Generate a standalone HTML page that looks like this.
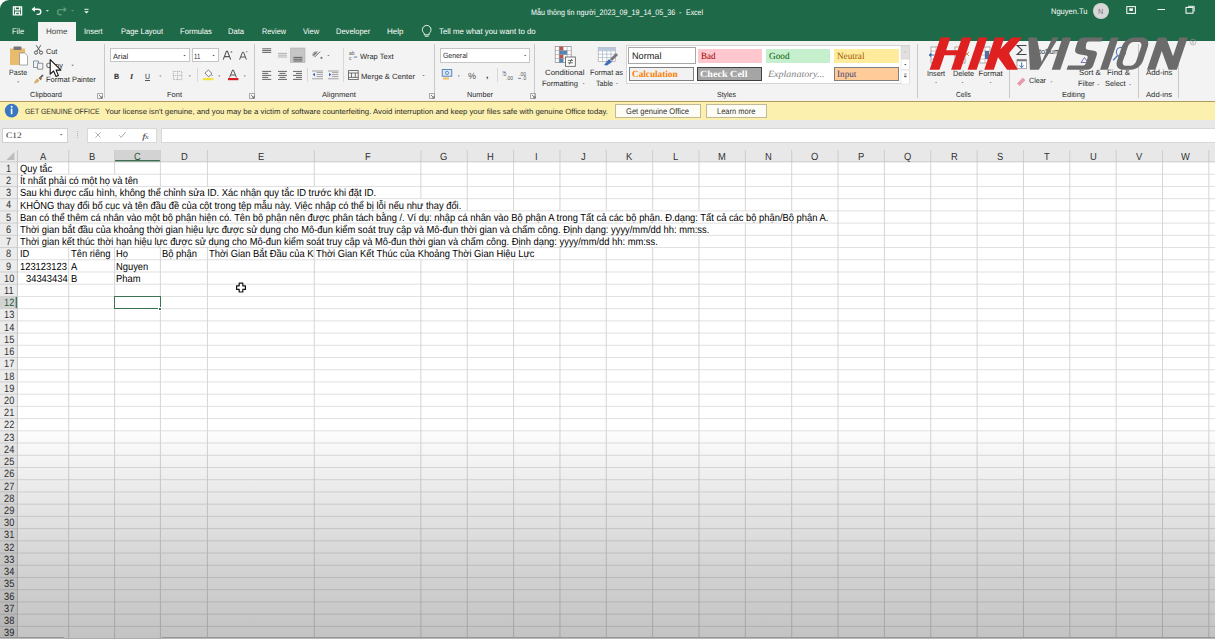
<!DOCTYPE html>
<html><head><meta charset="utf-8">
<style>
*{box-sizing:border-box;margin:0;padding:0}
html,body{width:1215px;height:639px;overflow:hidden;background:#fff;font-family:"Liberation Sans",sans-serif;position:relative}
.a{position:absolute;white-space:nowrap}
.t{position:absolute;white-space:nowrap;line-height:1;text-rendering:geometricPrecision}
svg{overflow:visible}
</style></head><body>
<div class="a" style="left:0;top:0;width:1215px;height:41px;background:#1e6947;border-top-left-radius:9px"></div>
<svg class="a" style="left:0;top:0" width="100" height="22" viewBox="0 0 100 22">
<g fill="none" stroke="#fff" stroke-width="1.3">
<path d="M13.4 6.8h8.2v8h-8.2z"/><path d="M15.3 6.8v3h4.4v-3" /><path d="M15.6 14.8v-2.6h3.8v2.6"/>
</g>
<path d="M34 9.2h4.2a2.6 2.6 0 0 1 0 5.2h-1.6" fill="none" stroke="#fff" stroke-width="1.4"/>
<path d="M31.6 9.2l3.2-2.8v5.6z" fill="#fff"/>
<path d="M45.8 10l1.6 1.7 1.6-1.7z" fill="#cfe0d5"/>
<path d="M64.4 9.6h-4.2a2.6 2.6 0 0 0 0 5.2h1.4" fill="none" stroke="#5f9a78" stroke-width="1.4"/>
<path d="M66.8 9.6l-3.2-2.8v5.6z" fill="#5f9a78"/>
<path d="M71 10l1.5 1.6 1.5-1.6z" fill="#5f9a78"/>
<path d="M84.4 9.3h4.2" stroke="#fff" stroke-width="0.9"/><path d="M84.3 11.2h4.4l-2.2 2.2z" fill="#fff"/>
</svg>
<div class="t" style="left:530.70px;top:9.00px;font-size:8px;color:#fff;transform:scaleX(0.8964);transform-origin:0 0;">Mẫu thông tin người_2023_09_19_14_05_36</div>
<div class="t" style="left:679.30px;top:9.00px;font-size:8px;color:#fff;transform:scaleX(0.9357);transform-origin:0 0;">-</div>
<div class="t" style="left:686.00px;top:9.00px;font-size:8px;color:#fff;transform:scaleX(0.8690);transform-origin:0 0;">Excel</div>
<div class="t" style="left:1050.50px;top:8.00px;font-size:8px;color:#fff;transform:scaleX(0.9397);transform-origin:0 0;">Nguyen.Tu</div>
<div class="a" style="left:1093px;top:3px;width:16px;height:16px;border-radius:50%;background:#d7d7d7"></div>
<div class="t" style="left:1098.30px;top:8.00px;font-size:7.5px;color:#777;transform:scaleX(0.9591);transform-origin:0 0;">N</div>
<svg class="a" style="left:1120px;top:0" width="95" height="22" viewBox="1120 0 95 22">
<rect x="1126.8" y="6.6" width="8.6" height="6.8" fill="none" stroke="#fff" stroke-width="1"/>
<rect x="1129.3" y="8.3" width="3.6" height="2.6" fill="#fff"/>
<path d="M1157.5 9.5h7.5" stroke="#fff" stroke-width="1"/>
<rect x="1186" y="7.4" width="7" height="5.8" fill="none" stroke="#fff" stroke-width="1"/>
<path d="M1188 6.3h6.2v5.2" fill="none" stroke="#fff" stroke-width="0.9"/>
</svg>
<div class="a" style="left:37.8px;top:21.9px;width:38px;height:20px;background:#f3f3f3"></div>
<div class="t" style="left:11.60px;top:28.00px;font-size:8px;color:#fff;transform:scaleX(0.9387);transform-origin:0 0;">File</div>
<div class="t" style="left:45.70px;top:28.00px;font-size:8px;color:#444;transform:scaleX(1.0073);transform-origin:0 0;">Home</div>
<div class="t" style="left:84.40px;top:28.00px;font-size:8px;color:#fff;transform:scaleX(0.9293);transform-origin:0 0;">Insert</div>
<div class="t" style="left:120.50px;top:28.00px;font-size:8px;color:#fff;transform:scaleX(0.9346);transform-origin:0 0;">Page Layout</div>
<div class="t" style="left:179.80px;top:28.00px;font-size:8px;color:#fff;transform:scaleX(0.9537);transform-origin:0 0;">Formulas</div>
<div class="t" style="left:228.40px;top:28.00px;font-size:8px;color:#fff;transform:scaleX(0.9464);transform-origin:0 0;">Data</div>
<div class="t" style="left:261.70px;top:28.00px;font-size:8px;color:#fff;transform:scaleX(0.9148);transform-origin:0 0;">Review</div>
<div class="t" style="left:302.70px;top:28.00px;font-size:8px;color:#fff;transform:scaleX(0.9359);transform-origin:0 0;">View</div>
<div class="t" style="left:336.30px;top:28.00px;font-size:8px;color:#fff;transform:scaleX(0.9405);transform-origin:0 0;">Developer</div>
<div class="t" style="left:387.40px;top:28.00px;font-size:8px;color:#fff;transform:scaleX(1.0089);transform-origin:0 0;">Help</div>
<div class="t" style="left:439.30px;top:28.00px;font-size:8px;color:#fff;transform:scaleX(0.9796);transform-origin:0 0;">Tell me what you want to do</div>
<svg class="a" style="left:420px;top:24px" width="14" height="14" viewBox="420 24 14 14">
<path d="M424.2 33.2c-1.4-1.1-1.8-2.2-1.8-3.5a4.3 4.3 0 0 1 8.6 0c0 1.3-.5 2.4-1.8 3.5v1.6h-5z" fill="none" stroke="#fff" stroke-width="0.9"/>
<path d="M424.8 36.2h3.8" stroke="#fff" stroke-width="0.9"/></svg>
<div class="a" style="left:0;top:40.5px;width:1215px;height:60.5px;background:#f3f3f3"></div>
<div class="a" style="left:104.0px;top:44px;width:1px;height:54px;background:#c9c9c9"></div>
<div class="a" style="left:253.5px;top:44px;width:1px;height:54px;background:#c9c9c9"></div>
<div class="a" style="left:433.5px;top:44px;width:1px;height:54px;background:#c9c9c9"></div>
<div class="a" style="left:534.0px;top:44px;width:1px;height:54px;background:#c9c9c9"></div>
<div class="a" style="left:916.8px;top:44px;width:1px;height:54px;background:#c9c9c9"></div>
<div class="a" style="left:1009.0px;top:44px;width:1px;height:54px;background:#c9c9c9"></div>
<div class="a" style="left:1138.2px;top:44px;width:1px;height:54px;background:#c9c9c9"></div>
<div class="a" style="left:1178.1px;top:44px;width:1px;height:54px;background:#c9c9c9"></div>
<div class="t" style="left:30.00px;top:91.00px;font-size:7.4px;color:#2b2b2b;transform:scaleX(1.0114);transform-origin:0 0;">Clipboard</div>
<div class="t" style="left:166.50px;top:91.00px;font-size:7.4px;color:#2b2b2b;transform:scaleX(1.0137);transform-origin:0 0;">Font</div>
<div class="t" style="left:322.00px;top:91.00px;font-size:7.4px;color:#2b2b2b;transform:scaleX(1.0342);transform-origin:0 0;">Alignment</div>
<div class="t" style="left:467.00px;top:91.00px;font-size:7.4px;color:#2b2b2b;transform:scaleX(0.9887);transform-origin:0 0;">Number</div>
<div class="t" style="left:717.00px;top:91.00px;font-size:7.4px;color:#2b2b2b;transform:scaleX(0.9434);transform-origin:0 0;">Styles</div>
<div class="t" style="left:955.50px;top:91.00px;font-size:7.4px;color:#2b2b2b;transform:scaleX(0.9125);transform-origin:0 0;">Cells</div>
<div class="t" style="left:1062.00px;top:91.00px;font-size:7.4px;color:#2b2b2b;transform:scaleX(1.0173);transform-origin:0 0;">Editing</div>
<div class="t" style="left:1145.50px;top:91.00px;font-size:7.4px;color:#2b2b2b;transform:scaleX(1.0374);transform-origin:0 0;">Add-ins</div>
<svg class="a" style="left:97px;top:93px" width="6" height="6" viewBox="0 0 6 6"><path d="M0.5 5.5V0.5h5v5z" fill="none" stroke="#888" stroke-width="0.7"/><path d="M2 2l3 3M5 3v2H3" fill="none" stroke="#666" stroke-width="0.8"/></svg>
<svg class="a" style="left:249px;top:93px" width="6" height="6" viewBox="0 0 6 6"><path d="M0.5 5.5V0.5h5v5z" fill="none" stroke="#888" stroke-width="0.7"/><path d="M2 2l3 3M5 3v2H3" fill="none" stroke="#666" stroke-width="0.8"/></svg>
<svg class="a" style="left:429px;top:93px" width="6" height="6" viewBox="0 0 6 6"><path d="M0.5 5.5V0.5h5v5z" fill="none" stroke="#888" stroke-width="0.7"/><path d="M2 2l3 3M5 3v2H3" fill="none" stroke="#666" stroke-width="0.8"/></svg>
<svg class="a" style="left:529.5px;top:93px" width="6" height="6" viewBox="0 0 6 6"><path d="M0.5 5.5V0.5h5v5z" fill="none" stroke="#888" stroke-width="0.7"/><path d="M2 2l3 3M5 3v2H3" fill="none" stroke="#666" stroke-width="0.8"/></svg>
<svg class="a" style="left:0;top:40px" width="105" height="50" viewBox="0 40 105 50">
<rect x="10" y="48.5" width="15" height="16.5" fill="#e9bb6c"/>
<rect x="13.5" y="46.6" width="8" height="3.4" rx="1" fill="#777"/>
<path d="M19.5 53h5.2l2.8 2.8V65h-8z" fill="#fff" stroke="#888" stroke-width="0.7"/>
<path d="M34 83.6c.6-2.4 1.6-4 3.4-5l2 2c-1 1.8-2.6 2.8-5.4 3z" fill="#d8b26a"/>
<path d="M38.6 78.2l1.4-1.4 2 2-1.4 1.4z" fill="#8a6a3a"/>
<path d="M40.6 77.4l2.4-2.4" stroke="#555" stroke-width="1.6"/>
<g fill="none" stroke="#4a4a4a" stroke-width="0.9"><circle cx="36" cy="52.6" r="1.6"/><circle cx="41" cy="52.6" r="1.6"/><path d="M36.8 51.4l4-6.2M40.2 51.4l-4-6.2"/></g>
<g fill="none" stroke="#6a7a8a" stroke-width="0.8"><path d="M33.5 61h5v6.5h-5z"/><path d="M37.6 63.2h5.2v6h-5.2z" fill="#f3f3f3"/></g>
<path d="M17 81.5l1.2 1.2 1.2-1.2z" fill="#777"/>
<path d="M71.3 64.8l1.3 1.3 1.3-1.3z" fill="#666"/>
</svg>
<div class="t" style="left:8.80px;top:69.00px;font-size:7.6px;color:#2b2b2b;transform:scaleX(0.9319);transform-origin:0 0;">Paste</div>
<div class="t" style="left:45.80px;top:48.00px;font-size:7.6px;color:#2b2b2b;transform:scaleX(0.9554);transform-origin:0 0;">Cut</div>
<div class="t" style="left:45.80px;top:62.00px;font-size:7.6px;color:#2b2b2b;transform:scaleX(0.9586);transform-origin:0 0;">Copy</div>
<div class="t" style="left:45.80px;top:76.00px;font-size:7.6px;color:#2b2b2b;transform:scaleX(0.9894);transform-origin:0 0;">Format Painter</div>
<div class="a" style="left:110.3px;top:48.3px;width:79.3px;height:14.1px;background:#fff;border:0.8px solid #c6c6c6"></div>
<div class="a" style="left:191.5px;top:48.3px;width:27px;height:14.1px;background:#fff;border:0.8px solid #c6c6c6"></div>
<div class="t" style="left:112.50px;top:53.00px;font-size:7.6px;color:#2b2b2b;transform:scaleX(1.0064);transform-origin:0 0;">Arial</div>
<div class="t" style="left:193.50px;top:53.00px;font-size:7.6px;color:#2b2b2b;transform:scaleX(0.7857);transform-origin:0 0;">11</div>
<svg class="a" style="left:105px;top:44px" width="150" height="44" viewBox="105 44 150 44">
<path d="M183.3 55l1.3 1.3 1.3-1.3z" fill="#555"/><path d="M212.3 55l1.3 1.3 1.3-1.3z" fill="#555"/>
<path d="M223.2 59.6l3.2-8.2h1.1l3.2 8.2M224.5 56.6h4.9" fill="none" stroke="#555" stroke-width="1.1"/><path d="M230.2 52.4l1.2-1.3 1.2 1.3z" fill="#555"/>
<path d="M239.6 59.6l2.9-7.4h1l2.9 7.4M240.8 57h4.3" fill="none" stroke="#555" stroke-width="1"/><path d="M245.6 51.4l1.1 1.2 1.1-1.2z" fill="#555"/>
<path d="M159.2 75.5l1.2 1.2 1.2-1.2zM188.6 75.5l1.2 1.2 1.2-1.2zM218.2 75.5l1.2 1.2 1.2-1.2zM243.6 75.5l1.2 1.2 1.2-1.2z" fill="#777"/>
<g fill="none" stroke="#9a9a9a" stroke-width="0.8" stroke-dasharray="1 0.8"><rect x="173.4" y="71.4" width="8.4" height="8.2"/><path d="M177.6 71.4v8.2M173.4 75.5h8.4"/></g>
<path d="M197.5 68v14" stroke="#d0d0d0" stroke-width="0.8"/>
<path d="M205 73.2l3.4-3.2 3.6 3.6-3.4 3.2z" fill="#fff" stroke="#555" stroke-width="0.8"/><path d="M211.2 73.8l1.4 1.8-.6.6z" fill="#3b6fb6"/>
<rect x="203" y="78" width="10.4" height="2.2" fill="#f4e23a"/>
<path d="M229.6 77.4l3-7.4h.8l3 7.4M230.8 75h4.4" fill="none" stroke="#555" stroke-width="1"/>
<rect x="228" y="78" width="10.4" height="2.2" fill="#d42020"/>
</svg>
<div class="t" style="left:114.20px;top:73.00px;font-size:7.8px;color:#2b2b2b;font-weight:bold;transform:scaleX(0.9219);transform-origin:0 0;">B</div>
<div class="t" style="left:129.50px;top:73.00px;font-size:7.8px;color:#2b2b2b;font-weight:bold;font-style:italic;font-family:'Liberation Serif',serif;transform:scaleX(1.0503);transform-origin:0 0;">I</div>
<div class="t" style="left:145.20px;top:73.00px;font-size:7.6px;color:#2b2b2b;transform:scaleX(0.9117);transform-origin:0 0;">U</div>
<div class="a" style="left:145.2px;top:79.8px;width:5.2px;height:0.8px;background:#555"></div>
<svg class="a" style="left:255px;top:44px" width="180" height="44" viewBox="255 44 180 44">
<rect x="290.5" y="48" width="14.5" height="14.5" fill="#c6c6c6" stroke="#b0b0b0" stroke-width="0.6"/>
<g stroke="#555" stroke-width="0.9"><path d="M262.2 48.8h9M262.2 50.6h9M262.2 52.4h9"/></g>
<g stroke="#aaa" stroke-width="0.9"><path d="M278 53.4h9M278 55.2h9M278 57h9"/></g>
<g stroke="#555" stroke-width="0.9"><path d="M293.4 57.4h9M293.4 59.2h9M293.4 61h9"/></g>
<path d="M313 55.6l4.2-4.2M314.5 57.2l5.5-5.5" stroke="#555" stroke-width="0.9"/><text x="312" y="55" font-size="5" fill="#555" font-family="Liberation Sans" transform="rotate(-45 315 54)">ab</text>
<path d="M321 56.4l2 1.8-2.6 .6z" fill="#555"/>
<path d="M327.2 55l1.2 1.2 1.2-1.2z" fill="#777"/>
<path d="M343.5 48v34M307.5 68v14" stroke="#d0d0d0" stroke-width="0.8"/>
<g stroke="#555" stroke-width="0.9"><path d="M262.2 71.4h9M262.2 73.4h6M262.2 75.4h9M262.2 77.4h6M262.2 79.4h9"/>
<path d="M278 71.4h9M279.5 73.4h6M278 75.4h9M279.5 77.4h6M278 79.4h9"/>
<path d="M293 71.4h9M296 73.4h6M293 75.4h9M296 77.4h6M293 79.4h9"/></g>
<g stroke="#999" stroke-width="0.9"><path d="M316.6 72.6h6.4M316.6 74.6h6.4M316.6 76.6h6.4M312 78.8h11"/><path d="M332 72.6h6.4M332 74.6h6.4M332 76.6h6.4M328 78.8h10.6"/><path d="M312 71h11M328 71h10.6"/></g>
<path d="M312.6 74.6l2.4-1.8v3.6z" fill="#3b6fb6"/><path d="M331.4 74.6l-2.4-1.8v3.6z" fill="#3b6fb6"/>
<g fill="none" stroke="#555" stroke-width="0.8"><rect x="348.6" y="70.6" width="9.6" height="9"/><path d="M348.6 73h9.6M348.6 77.4h9.6M351.5 73v4.4M355.3 73v4.4"/></g>
<path d="M422.4 75l1.2 1.2 1.2-1.2z" fill="#777"/>
<text x="349" y="55" font-size="5" fill="#555" font-family="Liberation Sans">ab</text><text x="349" y="59.5" font-size="5" fill="#555" font-family="Liberation Sans">c</text>
<path d="M353.5 57.2h3.4l-1 -1" fill="none" stroke="#3b6fb6" stroke-width="0.7"/>
</svg>
<div class="t" style="left:360.00px;top:53.00px;font-size:7.6px;color:#2b2b2b;transform:scaleX(0.9880);transform-origin:0 0;">Wrap Text</div>
<div class="t" style="left:360.50px;top:73.00px;font-size:7.6px;color:#2b2b2b;transform:scaleX(1.0073);transform-origin:0 0;">Merge &amp; Center</div>
<div class="a" style="left:440px;top:48px;width:89.5px;height:14.8px;background:#fff;border:0.8px solid #c6c6c6"></div>
<div class="t" style="left:442.50px;top:52.00px;font-size:7.6px;color:#2b2b2b;transform:scaleX(0.9064);transform-origin:0 0;">General</div>
<svg class="a" style="left:435px;top:44px" width="100" height="44" viewBox="435 44 100 44">
<path d="M524 55l1.2 1.2 1.2-1.2z" fill="#555"/>
<rect x="442.2" y="69.6" width="9.6" height="6.6" fill="#dce7f4" stroke="#3b6fb6" stroke-width="0.8"/>
<circle cx="447" cy="72.9" r="1.6" fill="none" stroke="#3b6fb6" stroke-width="0.7"/>
<rect x="443" y="77.4" width="6" height="2.2" fill="#f3c36b"/>
<path d="M457.6 75.5l1.2 1.2 1.2-1.2z" fill="#777"/>
<path d="M497.5 68v14" stroke="#d0d0d0" stroke-width="0.8"/>
<text x="502" y="75.5" font-size="5" fill="#555" font-family="Liberation Sans">.0</text><text x="506" y="80" font-size="5" fill="#555" font-family="Liberation Sans">.00</text>
<path d="M502.4 72h3" stroke="#3b6fb6" stroke-width="0.8"/>
<text x="519" y="75.5" font-size="5" fill="#555" font-family="Liberation Sans">.00</text><text x="522" y="80" font-size="5" fill="#555" font-family="Liberation Sans">.0</text>
<path d="M518 78.4h3" stroke="#3b6fb6" stroke-width="0.8"/>
</svg>
<div class="t" style="left:468.00px;top:72.00px;font-size:9.2px;color:#555;transform:scaleX(0.9790);transform-origin:0 0;">%</div>
<div class="t" style="left:486.00px;top:72.00px;font-size:8px;color:#2b2b2b;font-weight:bold;transform:scaleX(1.0741);transform-origin:0 0;">,</div>
<svg class="a" style="left:540px;top:44px" width="90" height="26" viewBox="540 44 90 26">
<g fill="#fff" stroke="#8a8a8a" stroke-width="0.7">
<rect x="555.2" y="46.6" width="16" height="16"/>
</g>
<rect x="559.2" y="46.6" width="4" height="4" fill="#c0504d"/>
<rect x="559.2" y="50.6" width="8" height="4" fill="#4f81bd"/>
<rect x="559.2" y="54.6" width="4" height="4" fill="#c0504d"/>
<rect x="559.2" y="58.6" width="4" height="4" fill="#4f81bd"/>
<path d="M555.2 50.6h16M555.2 54.6h16M555.2 58.6h16M559.2 46.6v16M563.2 46.6v16M567.2 46.6v16" stroke="#8a8a8a" stroke-width="0.5"/>
<rect x="565.5" y="57" width="9.8" height="9.3" fill="#fff" stroke="#555" stroke-width="0.8"/>
<path d="M567.8 60.4h5.2M567.8 62.8h5.2M571.8 58.8l-2.6 5.6" stroke="#333" stroke-width="0.7"/>
<rect x="598.2" y="47.4" width="17" height="14" fill="#fff" stroke="#999" stroke-width="0.6"/>
<path d="M598.2 50.8h17M598.2 54.2h17M598.2 57.6h17M602.5 47.4v14M606.8 47.4v14M611 47.4v14" stroke="#9ab" stroke-width="0.6"/>
<rect x="598.2" y="47.4" width="17" height="3.4" fill="#b8c8dc"/>
<path d="M604 65l5-6 3 3-5 3.6z" fill="#3b6fb6"/><path d="M610 59l6-6 2 2-6 6z" fill="#777"/>
</svg>
<div class="t" style="left:544.50px;top:69.00px;font-size:7.6px;color:#2b2b2b;transform:scaleX(1.0395);transform-origin:0 0;">Conditional</div>
<div class="t" style="left:541.50px;top:80.00px;font-size:7.6px;color:#2b2b2b;transform:scaleX(0.9918);transform-origin:0 0;">Formatting</div>
<div class="t" style="left:590.00px;top:69.00px;font-size:7.6px;color:#2b2b2b;transform:scaleX(0.9653);transform-origin:0 0;">Format as</div>
<div class="t" style="left:595.50px;top:80.00px;font-size:7.6px;color:#2b2b2b;transform:scaleX(0.9363);transform-origin:0 0;">Table</div>
<svg class="a" style="left:580px;top:81px" width="40" height="6" viewBox="580 81 40 6"><path d="M582.6 83l1.1 1.1 1.1-1.1zM616 83l1.1 1.1 1.1-1.1z" fill="#777"/></svg>
<div class="a" style="left:626px;top:45.4px;width:284px;height:39px;background:#fff;border:0.8px solid #d4d4d4"></div>
<div class="a" style="left:628px;top:47.4px;width:67.5px;height:16.8px;background:#fff;border:1.3px solid #a8a8a8"></div>
<div class="a" style="left:697.5px;top:48.5px;width:64.5px;height:14.5px;background:#ffc7ce"></div>
<div class="a" style="left:765.5px;top:48.5px;width:64.5px;height:14.5px;background:#c6efce"></div>
<div class="a" style="left:834px;top:48.5px;width:64.5px;height:14.5px;background:#ffeb9c"></div>
<div class="a" style="left:629px;top:67px;width:65px;height:14px;background:#f2f2f2;border:0.8px solid #7f7f7f"></div>
<div class="a" style="left:697px;top:67px;width:65px;height:14px;background:#a5a5a5;border:1.6px solid #3f3f3f"></div>
<div class="a" style="left:834px;top:67px;width:64.5px;height:14px;background:#ffcc99;border:0.8px solid #7f7f7f"></div>
<div class="t" style="left:631.50px;top:51.00px;font-size:9.4px;color:#222;transform:scaleX(0.9762);transform-origin:0 0;">Normal</div>
<div class="t" style="left:700.50px;top:53.00px;font-size:9.4px;color:#9c0006;font-family:'Liberation Serif',serif;transform:scaleX(0.9663);transform-origin:0 0;">Bad</div>
<div class="t" style="left:768.50px;top:53.00px;font-size:9.4px;color:#006100;font-family:'Liberation Serif',serif;transform:scaleX(0.9835);transform-origin:0 0;">Good</div>
<div class="t" style="left:837.00px;top:53.00px;font-size:9.4px;color:#9c5700;font-family:'Liberation Serif',serif;transform:scaleX(0.9778);transform-origin:0 0;">Neutral</div>
<div class="t" style="left:632.00px;top:71.00px;font-size:9.4px;color:#fa7d00;font-weight:bold;font-family:'Liberation Serif',serif;transform:scaleX(0.9815);transform-origin:0 0;">Calculation</div>
<div class="t" style="left:700.20px;top:71.00px;font-size:9.4px;color:#fff;font-weight:bold;font-family:'Liberation Serif',serif;transform:scaleX(1.0792);transform-origin:0 0;">Check Cell</div>
<div class="t" style="left:768.00px;top:71.00px;font-size:9.4px;color:#7f7f7f;font-style:italic;font-family:'Liberation Serif',serif;transform:scaleX(1.0689);transform-origin:0 0;">Explanatory...</div>
<div class="t" style="left:836.50px;top:71.00px;font-size:9.4px;color:#3f3f76;font-family:'Liberation Serif',serif;transform:scaleX(0.9800);transform-origin:0 0;">Input</div>
<svg class="a" style="left:900px;top:44px" width="12" height="42" viewBox="900 44 12 42">
<rect x="901" y="46.2" width="8.6" height="12.5" fill="#e0e0e0" stroke="#d0d0d0" stroke-width="0.5"/>
<rect x="901" y="59.2" width="8.6" height="10.5" fill="#fff" stroke="#d8d8d8" stroke-width="0.5"/>
<rect x="901" y="70" width="8.6" height="14" fill="#fff" stroke="#d8d8d8" stroke-width="0.5"/>
<path d="M904.2 52h2.4" stroke="#bbb" stroke-width="0.6"/>
<path d="M904 64l1.3 1.3 1.3-1.3z" fill="#555"/>
<path d="M903.8 74h3M904 76l1.3 1.3 1.3-1.3z" stroke="#555" stroke-width="0.6" fill="#555"/>
</svg>
<svg class="a" style="left:918px;top:44px" width="92" height="44" viewBox="918 44 92 44">
<g fill="#fff" stroke="#888" stroke-width="0.7">
<rect x="931" y="47" width="10" height="16"/><rect x="955" y="47" width="10" height="16"/><rect x="980" y="47" width="10" height="16"/>
</g>
<path d="M931 51h10M931 55h10M931 59h10M936 47v16M955 51h10M955 55h10M955 59h10M960 47v16M980 51h10M980 55h10M980 59h10M985 47v16" stroke="#888" stroke-width="0.5"/>
<path d="M929 55h5M929 55l2-1.6v3.2z" stroke="#3b6fb6" fill="#3b6fb6" stroke-width="0.8"/>
<path d="M965 52l4 4M969 52l-4 4" stroke="#e07a3a" stroke-width="0.9"/>
<rect x="985" y="51" width="4" height="8" fill="#4f6fa0"/>
<path d="M935 82l1.1 1.1 1.1-1.1zM961.5 82l1.1 1.1 1.1-1.1zM989.5 82l1.1 1.1 1.1-1.1z" fill="#777"/>
</svg>
<div class="t" style="left:926.70px;top:70.00px;font-size:7.6px;color:#2b2b2b;transform:scaleX(0.9526);transform-origin:0 0;">Insert</div>
<div class="t" style="left:952.50px;top:70.00px;font-size:7.6px;color:#2b2b2b;transform:scaleX(0.9566);transform-origin:0 0;">Delete</div>
<div class="t" style="left:978.50px;top:70.00px;font-size:7.6px;color:#2b2b2b;">Format</div>
<svg class="a" style="left:1010px;top:44px" width="170" height="44" viewBox="1010 44 170 44">
<path d="M1026.5 45.5h-9.3l4.8 4.4-4.8 4.6h9.3" fill="none" stroke="#444" stroke-width="1.2"/>
<rect x="1017" y="59.5" width="9.4" height="9.2" fill="#fff" stroke="#888" stroke-width="0.7"/>
<rect x="1017" y="59.5" width="9.4" height="1.8" fill="#777"/>
<path d="M1021.7 62.4v5M1019.6 65.4l2.1 2.1 2.1-2.1" fill="none" stroke="#3b6fb6" stroke-width="1"/>
<path d="M1017 83.4l5.8-5.8 2.6 2.6-5.8 5.8z" fill="#e89aae"/>
<path d="M1050.4 81.5l1.1 1.1 1.1-1.1zM1097.2 84.2l1.1 1.1 1.1-1.1zM1129 84.2l1.1 1.1 1.1-1.1z" fill="#777"/>
<path d="M1081 62.5l3.5-5 3.5 5z" fill="none" stroke="#7b6fb8" stroke-width="1"/>
<circle cx="1121" cy="52" r="4.6" fill="none" stroke="#4a7cc0" stroke-width="1.1"/><path d="M1117.6 55.6l-4.4 4.6" stroke="#4a7cc0" stroke-width="1.4"/>
<circle cx="1158" cy="55" r="2.4" fill="#f0a830"/>
</svg>
<div class="t" style="left:1029.00px;top:77.00px;font-size:7.6px;color:#2b2b2b;transform:scaleX(0.9363);transform-origin:0 0;">Clear</div>
<div class="t" style="left:1030.00px;top:48.00px;font-size:7.6px;color:#2b2b2b;transform:scaleX(0.9600);transform-origin:0 0;">AutoSum</div>
<div class="t" style="left:1078.90px;top:69.00px;font-size:7.6px;color:#2b2b2b;transform:scaleX(1.0280);transform-origin:0 0;">Sort &amp;</div>
<div class="t" style="left:1077.60px;top:80.00px;font-size:7.6px;color:#2b2b2b;transform:scaleX(0.9778);transform-origin:0 0;">Filter</div>
<div class="t" style="left:1106.60px;top:69.00px;font-size:7.6px;color:#2b2b2b;transform:scaleX(1.0477);transform-origin:0 0;">Find &amp;</div>
<div class="t" style="left:1104.60px;top:80.00px;font-size:7.6px;color:#2b2b2b;transform:scaleX(0.9711);transform-origin:0 0;">Select</div>
<div class="t" style="left:1145.50px;top:69.00px;font-size:7.6px;color:#2b2b2b;transform:scaleX(1.0291);transform-origin:0 0;">Add-ins</div>
<div class="a" style="left:0;top:100.7px;width:1215px;height:19.6px;background:#fcf0ae"></div>
<div class="a" style="left:0;top:100.7px;width:1215px;height:1px;background:#b09c60"></div>
<div class="a" style="left:0;top:119.6px;width:1215px;height:1px;background:#cdbd8a"></div>
<svg class="a" style="left:0;top:100px" width="20" height="20" viewBox="0 100 20 20">
<circle cx="11.6" cy="110.6" r="6.8" fill="#3a77c2"/>
<circle cx="11.6" cy="106.8" r="1" fill="#fff"/><rect x="10.8" y="108.6" width="1.6" height="5.6" fill="#fff"/>
</svg>
<div class="t" style="left:24.80px;top:108.00px;font-size:7.6px;color:#2b2b2b;transform:scaleX(0.9070);transform-origin:0 0;">GET GENUINE OFFICE</div>
<div class="t" style="left:105.00px;top:108.00px;font-size:7.6px;color:#2b2b2b;transform:scaleX(1.0213);transform-origin:0 0;">Your license isn't genuine, and you may be a victim of software counterfeiting. Avoid interruption and keep your files safe with genuine Office today.</div>
<div class="a" style="left:615.3px;top:103.7px;width:85.6px;height:14px;background:#fdfdf6;border:0.9px solid #c3b994"></div>
<div class="a" style="left:706px;top:103.7px;width:60.6px;height:14px;background:#fdfdf6;border:0.9px solid #c3b994"></div>
<div class="t" style="left:626.00px;top:108.00px;font-size:8.2px;color:#333;transform:scaleX(0.9248);transform-origin:0 0;">Get genuine Office</div>
<div class="t" style="left:716.80px;top:108.00px;font-size:8.2px;color:#333;transform:scaleX(0.9146);transform-origin:0 0;">Learn more</div>
<div class="a" style="left:0;top:120.3px;width:1215px;height:29.7px;background:#e8e8e8"></div>
<div class="a" style="left:2px;top:127.8px;width:65.5px;height:15.4px;background:#fff;border:0.8px solid #d0d0d0"></div>
<div class="t" style="left:6.40px;top:132.00px;font-size:8.4px;color:#2b2b2b;font-family:'Liberation Serif',serif;transform:scaleX(1.1168);transform-origin:0 0;">C12</div>
<div class="a" style="left:87.4px;top:127.8px;width:70px;height:15.4px;background:#fff;border:0.8px solid #d8d8d8"></div>
<div class="a" style="left:160.6px;top:127.8px;width:1060px;height:15.4px;background:#fff;border:0.8px solid #d8d8d8"></div>
<svg class="a" style="left:0;top:120px" width="160" height="30" viewBox="0 120 160 30">
<path d="M59.8 134l1.4 1.4 1.4-1.4z" fill="#777"/>
<path d="M77.5 131v1M77.5 133v1M77.5 135v1M77.5 137v1" stroke="#aaa" stroke-width="0.8"/>
<path d="M95.4 132.4l5.2 5.2M100.6 132.4l-5.2 5.2" stroke="#aaa" stroke-width="0.9"/>
<path d="M119.2 135.2l2 2.2 4.4-5.4" fill="none" stroke="#aaa" stroke-width="1"/>
</svg>
<div class="t" style="left:141.50px;top:132.00px;font-size:8.6px;color:#555;font-style:italic;font-family:'Liberation Serif',serif;transform:scaleX(1.5895);transform-origin:0 0;">f</div>
<div class="t" style="left:145.00px;top:135.00px;font-size:6.6px;color:#555;font-style:italic;font-family:'Liberation Serif',serif;transform:scaleX(1.2936);transform-origin:0 0;">x</div>
<svg class="a" style="left:0;top:0" width="1215" height="639" viewBox="0 0 1215 639">
<rect x="0" y="150" width="1215" height="12" fill="#e8e8e8"/>
<rect x="0" y="162" width="17.4" height="477" fill="#ececec"/>
<rect x="17.4" y="162" width="1200" height="477" fill="#fff"/>
<rect x="114.6" y="150" width="45.8" height="12" fill="#d3d3d3"/>
<rect x="114.6" y="160" width="45.8" height="1.7" fill="#3d6e50"/>
<rect x="0" y="296.42" width="17.4" height="12.22" fill="#d3d3d3"/>
<rect x="15.7" y="296.42" width="1.7" height="12.22" fill="#3d6e50"/>
<rect x="17.4" y="173.72" width="1200" height="1" fill="#e0e0e0"/>
<rect x="0" y="173.72" width="17.4" height="1" fill="#d0d0d0"/>
<rect x="17.4" y="185.94" width="1200" height="1" fill="#e0e0e0"/>
<rect x="0" y="185.94" width="17.4" height="1" fill="#d0d0d0"/>
<rect x="17.4" y="198.16" width="1200" height="1" fill="#e0e0e0"/>
<rect x="0" y="198.16" width="17.4" height="1" fill="#d0d0d0"/>
<rect x="17.4" y="210.38" width="1200" height="1" fill="#e0e0e0"/>
<rect x="0" y="210.38" width="17.4" height="1" fill="#d0d0d0"/>
<rect x="17.4" y="222.60" width="1200" height="1" fill="#e0e0e0"/>
<rect x="0" y="222.60" width="17.4" height="1" fill="#d0d0d0"/>
<rect x="17.4" y="234.82" width="1200" height="1" fill="#e0e0e0"/>
<rect x="0" y="234.82" width="17.4" height="1" fill="#d0d0d0"/>
<rect x="17.4" y="247.04" width="1200" height="1" fill="#e0e0e0"/>
<rect x="0" y="247.04" width="17.4" height="1" fill="#d0d0d0"/>
<rect x="17.4" y="259.26" width="1200" height="1" fill="#e0e0e0"/>
<rect x="0" y="259.26" width="17.4" height="1" fill="#d0d0d0"/>
<rect x="17.4" y="271.48" width="1200" height="1" fill="#e0e0e0"/>
<rect x="0" y="271.48" width="17.4" height="1" fill="#d0d0d0"/>
<rect x="17.4" y="283.70" width="1200" height="1" fill="#e0e0e0"/>
<rect x="0" y="283.70" width="17.4" height="1" fill="#d0d0d0"/>
<rect x="17.4" y="295.92" width="1200" height="1" fill="#e0e0e0"/>
<rect x="0" y="295.92" width="17.4" height="1" fill="#d0d0d0"/>
<rect x="17.4" y="308.14" width="1200" height="1" fill="#e0e0e0"/>
<rect x="0" y="308.14" width="17.4" height="1" fill="#d0d0d0"/>
<rect x="17.4" y="320.36" width="1200" height="1" fill="#e0e0e0"/>
<rect x="0" y="320.36" width="17.4" height="1" fill="#d0d0d0"/>
<rect x="17.4" y="332.58" width="1200" height="1" fill="#e0e0e0"/>
<rect x="0" y="332.58" width="17.4" height="1" fill="#d0d0d0"/>
<rect x="17.4" y="344.80" width="1200" height="1" fill="#e0e0e0"/>
<rect x="0" y="344.80" width="17.4" height="1" fill="#d0d0d0"/>
<rect x="17.4" y="357.02" width="1200" height="1" fill="#e0e0e0"/>
<rect x="0" y="357.02" width="17.4" height="1" fill="#d0d0d0"/>
<rect x="17.4" y="369.24" width="1200" height="1" fill="#e0e0e0"/>
<rect x="0" y="369.24" width="17.4" height="1" fill="#d0d0d0"/>
<rect x="17.4" y="381.46" width="1200" height="1" fill="#e0e0e0"/>
<rect x="0" y="381.46" width="17.4" height="1" fill="#d0d0d0"/>
<rect x="17.4" y="393.68" width="1200" height="1" fill="#e0e0e0"/>
<rect x="0" y="393.68" width="17.4" height="1" fill="#d0d0d0"/>
<rect x="17.4" y="405.90" width="1200" height="1" fill="#e0e0e0"/>
<rect x="0" y="405.90" width="17.4" height="1" fill="#d0d0d0"/>
<rect x="17.4" y="418.12" width="1200" height="1" fill="#e0e0e0"/>
<rect x="0" y="418.12" width="17.4" height="1" fill="#d0d0d0"/>
<rect x="17.4" y="430.34" width="1200" height="1" fill="#e0e0e0"/>
<rect x="0" y="430.34" width="17.4" height="1" fill="#d0d0d0"/>
<rect x="17.4" y="442.56" width="1200" height="1" fill="#e0e0e0"/>
<rect x="0" y="442.56" width="17.4" height="1" fill="#d0d0d0"/>
<rect x="17.4" y="454.78" width="1200" height="1" fill="#e0e0e0"/>
<rect x="0" y="454.78" width="17.4" height="1" fill="#d0d0d0"/>
<rect x="17.4" y="467.00" width="1200" height="1" fill="#e0e0e0"/>
<rect x="0" y="467.00" width="17.4" height="1" fill="#d0d0d0"/>
<rect x="17.4" y="479.22" width="1200" height="1" fill="#e0e0e0"/>
<rect x="0" y="479.22" width="17.4" height="1" fill="#d0d0d0"/>
<rect x="17.4" y="491.44" width="1200" height="1" fill="#e0e0e0"/>
<rect x="0" y="491.44" width="17.4" height="1" fill="#d0d0d0"/>
<rect x="17.4" y="503.66" width="1200" height="1" fill="#e0e0e0"/>
<rect x="0" y="503.66" width="17.4" height="1" fill="#d0d0d0"/>
<rect x="17.4" y="515.88" width="1200" height="1" fill="#e0e0e0"/>
<rect x="0" y="515.88" width="17.4" height="1" fill="#d0d0d0"/>
<rect x="17.4" y="528.10" width="1200" height="1" fill="#e0e0e0"/>
<rect x="0" y="528.10" width="17.4" height="1" fill="#d0d0d0"/>
<rect x="17.4" y="540.32" width="1200" height="1" fill="#e0e0e0"/>
<rect x="0" y="540.32" width="17.4" height="1" fill="#d0d0d0"/>
<rect x="17.4" y="552.54" width="1200" height="1" fill="#e0e0e0"/>
<rect x="0" y="552.54" width="17.4" height="1" fill="#d0d0d0"/>
<rect x="17.4" y="564.76" width="1200" height="1" fill="#e0e0e0"/>
<rect x="0" y="564.76" width="17.4" height="1" fill="#d0d0d0"/>
<rect x="17.4" y="576.98" width="1200" height="1" fill="#e0e0e0"/>
<rect x="0" y="576.98" width="17.4" height="1" fill="#d0d0d0"/>
<rect x="17.4" y="589.20" width="1200" height="1" fill="#e0e0e0"/>
<rect x="0" y="589.20" width="17.4" height="1" fill="#d0d0d0"/>
<rect x="17.4" y="601.42" width="1200" height="1" fill="#e0e0e0"/>
<rect x="0" y="601.42" width="17.4" height="1" fill="#d0d0d0"/>
<rect x="17.4" y="613.64" width="1200" height="1" fill="#e0e0e0"/>
<rect x="0" y="613.64" width="17.4" height="1" fill="#d0d0d0"/>
<rect x="17.4" y="625.86" width="1200" height="1" fill="#e0e0e0"/>
<rect x="0" y="625.86" width="17.4" height="1" fill="#d0d0d0"/>
<rect x="17.4" y="638.08" width="1200" height="1" fill="#e0e0e0"/>
<rect x="0" y="638.08" width="17.4" height="1" fill="#d0d0d0"/>
<rect x="17.4" y="650.30" width="1200" height="1" fill="#e0e0e0"/>
<rect x="0" y="650.30" width="17.4" height="1" fill="#d0d0d0"/>
<rect x="68.20" y="161.50" width="1" height="12.72" fill="#d6d6d6"/>
<rect x="68.20" y="247.04" width="1" height="12.72" fill="#d6d6d6"/>
<rect x="68.20" y="259.26" width="1" height="12.72" fill="#d6d6d6"/>
<rect x="68.20" y="271.48" width="1" height="12.72" fill="#d6d6d6"/>
<rect x="68.20" y="283.70" width="1" height="12.72" fill="#d6d6d6"/>
<rect x="68.20" y="295.92" width="1" height="12.72" fill="#d6d6d6"/>
<rect x="68.20" y="308.14" width="1" height="12.72" fill="#d6d6d6"/>
<rect x="68.20" y="320.36" width="1" height="12.72" fill="#d6d6d6"/>
<rect x="68.20" y="332.58" width="1" height="12.72" fill="#d6d6d6"/>
<rect x="68.20" y="344.80" width="1" height="12.72" fill="#d6d6d6"/>
<rect x="68.20" y="357.02" width="1" height="12.72" fill="#d6d6d6"/>
<rect x="68.20" y="369.24" width="1" height="12.72" fill="#d6d6d6"/>
<rect x="68.20" y="381.46" width="1" height="12.72" fill="#d6d6d6"/>
<rect x="68.20" y="393.68" width="1" height="12.72" fill="#d6d6d6"/>
<rect x="68.20" y="405.90" width="1" height="12.72" fill="#d6d6d6"/>
<rect x="68.20" y="418.12" width="1" height="12.72" fill="#d6d6d6"/>
<rect x="68.20" y="430.34" width="1" height="12.72" fill="#d6d6d6"/>
<rect x="68.20" y="442.56" width="1" height="12.72" fill="#d6d6d6"/>
<rect x="68.20" y="454.78" width="1" height="12.72" fill="#d6d6d6"/>
<rect x="68.20" y="467.00" width="1" height="12.72" fill="#d6d6d6"/>
<rect x="68.20" y="479.22" width="1" height="12.72" fill="#d6d6d6"/>
<rect x="68.20" y="491.44" width="1" height="12.72" fill="#d6d6d6"/>
<rect x="68.20" y="503.66" width="1" height="12.72" fill="#d6d6d6"/>
<rect x="68.20" y="515.88" width="1" height="12.72" fill="#d6d6d6"/>
<rect x="68.20" y="528.10" width="1" height="12.72" fill="#d6d6d6"/>
<rect x="68.20" y="540.32" width="1" height="12.72" fill="#d6d6d6"/>
<rect x="68.20" y="552.54" width="1" height="12.72" fill="#d6d6d6"/>
<rect x="68.20" y="564.76" width="1" height="12.72" fill="#d6d6d6"/>
<rect x="68.20" y="576.98" width="1" height="12.72" fill="#d6d6d6"/>
<rect x="68.20" y="589.20" width="1" height="12.72" fill="#d6d6d6"/>
<rect x="68.20" y="601.42" width="1" height="12.72" fill="#d6d6d6"/>
<rect x="68.20" y="613.64" width="1" height="12.72" fill="#d6d6d6"/>
<rect x="68.20" y="625.86" width="1" height="12.72" fill="#d6d6d6"/>
<rect x="68.20" y="150" width="1" height="12" fill="#cdcdcd"/>
<rect x="114.10" y="161.50" width="1" height="12.72" fill="#d6d6d6"/>
<rect x="114.10" y="247.04" width="1" height="12.72" fill="#d6d6d6"/>
<rect x="114.10" y="259.26" width="1" height="12.72" fill="#d6d6d6"/>
<rect x="114.10" y="271.48" width="1" height="12.72" fill="#d6d6d6"/>
<rect x="114.10" y="283.70" width="1" height="12.72" fill="#d6d6d6"/>
<rect x="114.10" y="295.92" width="1" height="12.72" fill="#d6d6d6"/>
<rect x="114.10" y="308.14" width="1" height="12.72" fill="#d6d6d6"/>
<rect x="114.10" y="320.36" width="1" height="12.72" fill="#d6d6d6"/>
<rect x="114.10" y="332.58" width="1" height="12.72" fill="#d6d6d6"/>
<rect x="114.10" y="344.80" width="1" height="12.72" fill="#d6d6d6"/>
<rect x="114.10" y="357.02" width="1" height="12.72" fill="#d6d6d6"/>
<rect x="114.10" y="369.24" width="1" height="12.72" fill="#d6d6d6"/>
<rect x="114.10" y="381.46" width="1" height="12.72" fill="#d6d6d6"/>
<rect x="114.10" y="393.68" width="1" height="12.72" fill="#d6d6d6"/>
<rect x="114.10" y="405.90" width="1" height="12.72" fill="#d6d6d6"/>
<rect x="114.10" y="418.12" width="1" height="12.72" fill="#d6d6d6"/>
<rect x="114.10" y="430.34" width="1" height="12.72" fill="#d6d6d6"/>
<rect x="114.10" y="442.56" width="1" height="12.72" fill="#d6d6d6"/>
<rect x="114.10" y="454.78" width="1" height="12.72" fill="#d6d6d6"/>
<rect x="114.10" y="467.00" width="1" height="12.72" fill="#d6d6d6"/>
<rect x="114.10" y="479.22" width="1" height="12.72" fill="#d6d6d6"/>
<rect x="114.10" y="491.44" width="1" height="12.72" fill="#d6d6d6"/>
<rect x="114.10" y="503.66" width="1" height="12.72" fill="#d6d6d6"/>
<rect x="114.10" y="515.88" width="1" height="12.72" fill="#d6d6d6"/>
<rect x="114.10" y="528.10" width="1" height="12.72" fill="#d6d6d6"/>
<rect x="114.10" y="540.32" width="1" height="12.72" fill="#d6d6d6"/>
<rect x="114.10" y="552.54" width="1" height="12.72" fill="#d6d6d6"/>
<rect x="114.10" y="564.76" width="1" height="12.72" fill="#d6d6d6"/>
<rect x="114.10" y="576.98" width="1" height="12.72" fill="#d6d6d6"/>
<rect x="114.10" y="589.20" width="1" height="12.72" fill="#d6d6d6"/>
<rect x="114.10" y="601.42" width="1" height="12.72" fill="#d6d6d6"/>
<rect x="114.10" y="613.64" width="1" height="12.72" fill="#d6d6d6"/>
<rect x="114.10" y="625.86" width="1" height="12.72" fill="#d6d6d6"/>
<rect x="114.10" y="150" width="1" height="12" fill="#cdcdcd"/>
<rect x="159.90" y="161.50" width="1" height="12.72" fill="#d6d6d6"/>
<rect x="159.90" y="173.72" width="1" height="12.72" fill="#d6d6d6"/>
<rect x="159.90" y="247.04" width="1" height="12.72" fill="#d6d6d6"/>
<rect x="159.90" y="259.26" width="1" height="12.72" fill="#d6d6d6"/>
<rect x="159.90" y="271.48" width="1" height="12.72" fill="#d6d6d6"/>
<rect x="159.90" y="283.70" width="1" height="12.72" fill="#d6d6d6"/>
<rect x="159.90" y="295.92" width="1" height="12.72" fill="#d6d6d6"/>
<rect x="159.90" y="308.14" width="1" height="12.72" fill="#d6d6d6"/>
<rect x="159.90" y="320.36" width="1" height="12.72" fill="#d6d6d6"/>
<rect x="159.90" y="332.58" width="1" height="12.72" fill="#d6d6d6"/>
<rect x="159.90" y="344.80" width="1" height="12.72" fill="#d6d6d6"/>
<rect x="159.90" y="357.02" width="1" height="12.72" fill="#d6d6d6"/>
<rect x="159.90" y="369.24" width="1" height="12.72" fill="#d6d6d6"/>
<rect x="159.90" y="381.46" width="1" height="12.72" fill="#d6d6d6"/>
<rect x="159.90" y="393.68" width="1" height="12.72" fill="#d6d6d6"/>
<rect x="159.90" y="405.90" width="1" height="12.72" fill="#d6d6d6"/>
<rect x="159.90" y="418.12" width="1" height="12.72" fill="#d6d6d6"/>
<rect x="159.90" y="430.34" width="1" height="12.72" fill="#d6d6d6"/>
<rect x="159.90" y="442.56" width="1" height="12.72" fill="#d6d6d6"/>
<rect x="159.90" y="454.78" width="1" height="12.72" fill="#d6d6d6"/>
<rect x="159.90" y="467.00" width="1" height="12.72" fill="#d6d6d6"/>
<rect x="159.90" y="479.22" width="1" height="12.72" fill="#d6d6d6"/>
<rect x="159.90" y="491.44" width="1" height="12.72" fill="#d6d6d6"/>
<rect x="159.90" y="503.66" width="1" height="12.72" fill="#d6d6d6"/>
<rect x="159.90" y="515.88" width="1" height="12.72" fill="#d6d6d6"/>
<rect x="159.90" y="528.10" width="1" height="12.72" fill="#d6d6d6"/>
<rect x="159.90" y="540.32" width="1" height="12.72" fill="#d6d6d6"/>
<rect x="159.90" y="552.54" width="1" height="12.72" fill="#d6d6d6"/>
<rect x="159.90" y="564.76" width="1" height="12.72" fill="#d6d6d6"/>
<rect x="159.90" y="576.98" width="1" height="12.72" fill="#d6d6d6"/>
<rect x="159.90" y="589.20" width="1" height="12.72" fill="#d6d6d6"/>
<rect x="159.90" y="601.42" width="1" height="12.72" fill="#d6d6d6"/>
<rect x="159.90" y="613.64" width="1" height="12.72" fill="#d6d6d6"/>
<rect x="159.90" y="625.86" width="1" height="12.72" fill="#d6d6d6"/>
<rect x="159.90" y="150" width="1" height="12" fill="#cdcdcd"/>
<rect x="206.90" y="161.50" width="1" height="12.72" fill="#d6d6d6"/>
<rect x="206.90" y="173.72" width="1" height="12.72" fill="#d6d6d6"/>
<rect x="206.90" y="247.04" width="1" height="12.72" fill="#d6d6d6"/>
<rect x="206.90" y="259.26" width="1" height="12.72" fill="#d6d6d6"/>
<rect x="206.90" y="271.48" width="1" height="12.72" fill="#d6d6d6"/>
<rect x="206.90" y="283.70" width="1" height="12.72" fill="#d6d6d6"/>
<rect x="206.90" y="295.92" width="1" height="12.72" fill="#d6d6d6"/>
<rect x="206.90" y="308.14" width="1" height="12.72" fill="#d6d6d6"/>
<rect x="206.90" y="320.36" width="1" height="12.72" fill="#d6d6d6"/>
<rect x="206.90" y="332.58" width="1" height="12.72" fill="#d6d6d6"/>
<rect x="206.90" y="344.80" width="1" height="12.72" fill="#d6d6d6"/>
<rect x="206.90" y="357.02" width="1" height="12.72" fill="#d6d6d6"/>
<rect x="206.90" y="369.24" width="1" height="12.72" fill="#d6d6d6"/>
<rect x="206.90" y="381.46" width="1" height="12.72" fill="#d6d6d6"/>
<rect x="206.90" y="393.68" width="1" height="12.72" fill="#d6d6d6"/>
<rect x="206.90" y="405.90" width="1" height="12.72" fill="#d6d6d6"/>
<rect x="206.90" y="418.12" width="1" height="12.72" fill="#d6d6d6"/>
<rect x="206.90" y="430.34" width="1" height="12.72" fill="#d6d6d6"/>
<rect x="206.90" y="442.56" width="1" height="12.72" fill="#d6d6d6"/>
<rect x="206.90" y="454.78" width="1" height="12.72" fill="#d6d6d6"/>
<rect x="206.90" y="467.00" width="1" height="12.72" fill="#d6d6d6"/>
<rect x="206.90" y="479.22" width="1" height="12.72" fill="#d6d6d6"/>
<rect x="206.90" y="491.44" width="1" height="12.72" fill="#d6d6d6"/>
<rect x="206.90" y="503.66" width="1" height="12.72" fill="#d6d6d6"/>
<rect x="206.90" y="515.88" width="1" height="12.72" fill="#d6d6d6"/>
<rect x="206.90" y="528.10" width="1" height="12.72" fill="#d6d6d6"/>
<rect x="206.90" y="540.32" width="1" height="12.72" fill="#d6d6d6"/>
<rect x="206.90" y="552.54" width="1" height="12.72" fill="#d6d6d6"/>
<rect x="206.90" y="564.76" width="1" height="12.72" fill="#d6d6d6"/>
<rect x="206.90" y="576.98" width="1" height="12.72" fill="#d6d6d6"/>
<rect x="206.90" y="589.20" width="1" height="12.72" fill="#d6d6d6"/>
<rect x="206.90" y="601.42" width="1" height="12.72" fill="#d6d6d6"/>
<rect x="206.90" y="613.64" width="1" height="12.72" fill="#d6d6d6"/>
<rect x="206.90" y="625.86" width="1" height="12.72" fill="#d6d6d6"/>
<rect x="206.90" y="150" width="1" height="12" fill="#cdcdcd"/>
<rect x="313.80" y="161.50" width="1" height="12.72" fill="#d6d6d6"/>
<rect x="313.80" y="173.72" width="1" height="12.72" fill="#d6d6d6"/>
<rect x="313.80" y="247.04" width="1" height="12.72" fill="#d6d6d6"/>
<rect x="313.80" y="259.26" width="1" height="12.72" fill="#d6d6d6"/>
<rect x="313.80" y="271.48" width="1" height="12.72" fill="#d6d6d6"/>
<rect x="313.80" y="283.70" width="1" height="12.72" fill="#d6d6d6"/>
<rect x="313.80" y="295.92" width="1" height="12.72" fill="#d6d6d6"/>
<rect x="313.80" y="308.14" width="1" height="12.72" fill="#d6d6d6"/>
<rect x="313.80" y="320.36" width="1" height="12.72" fill="#d6d6d6"/>
<rect x="313.80" y="332.58" width="1" height="12.72" fill="#d6d6d6"/>
<rect x="313.80" y="344.80" width="1" height="12.72" fill="#d6d6d6"/>
<rect x="313.80" y="357.02" width="1" height="12.72" fill="#d6d6d6"/>
<rect x="313.80" y="369.24" width="1" height="12.72" fill="#d6d6d6"/>
<rect x="313.80" y="381.46" width="1" height="12.72" fill="#d6d6d6"/>
<rect x="313.80" y="393.68" width="1" height="12.72" fill="#d6d6d6"/>
<rect x="313.80" y="405.90" width="1" height="12.72" fill="#d6d6d6"/>
<rect x="313.80" y="418.12" width="1" height="12.72" fill="#d6d6d6"/>
<rect x="313.80" y="430.34" width="1" height="12.72" fill="#d6d6d6"/>
<rect x="313.80" y="442.56" width="1" height="12.72" fill="#d6d6d6"/>
<rect x="313.80" y="454.78" width="1" height="12.72" fill="#d6d6d6"/>
<rect x="313.80" y="467.00" width="1" height="12.72" fill="#d6d6d6"/>
<rect x="313.80" y="479.22" width="1" height="12.72" fill="#d6d6d6"/>
<rect x="313.80" y="491.44" width="1" height="12.72" fill="#d6d6d6"/>
<rect x="313.80" y="503.66" width="1" height="12.72" fill="#d6d6d6"/>
<rect x="313.80" y="515.88" width="1" height="12.72" fill="#d6d6d6"/>
<rect x="313.80" y="528.10" width="1" height="12.72" fill="#d6d6d6"/>
<rect x="313.80" y="540.32" width="1" height="12.72" fill="#d6d6d6"/>
<rect x="313.80" y="552.54" width="1" height="12.72" fill="#d6d6d6"/>
<rect x="313.80" y="564.76" width="1" height="12.72" fill="#d6d6d6"/>
<rect x="313.80" y="576.98" width="1" height="12.72" fill="#d6d6d6"/>
<rect x="313.80" y="589.20" width="1" height="12.72" fill="#d6d6d6"/>
<rect x="313.80" y="601.42" width="1" height="12.72" fill="#d6d6d6"/>
<rect x="313.80" y="613.64" width="1" height="12.72" fill="#d6d6d6"/>
<rect x="313.80" y="625.86" width="1" height="12.72" fill="#d6d6d6"/>
<rect x="313.80" y="150" width="1" height="12" fill="#cdcdcd"/>
<rect x="420.40" y="161.50" width="1" height="12.72" fill="#d6d6d6"/>
<rect x="420.40" y="173.72" width="1" height="12.72" fill="#d6d6d6"/>
<rect x="420.40" y="185.94" width="1" height="12.72" fill="#d6d6d6"/>
<rect x="420.40" y="259.26" width="1" height="12.72" fill="#d6d6d6"/>
<rect x="420.40" y="271.48" width="1" height="12.72" fill="#d6d6d6"/>
<rect x="420.40" y="283.70" width="1" height="12.72" fill="#d6d6d6"/>
<rect x="420.40" y="295.92" width="1" height="12.72" fill="#d6d6d6"/>
<rect x="420.40" y="308.14" width="1" height="12.72" fill="#d6d6d6"/>
<rect x="420.40" y="320.36" width="1" height="12.72" fill="#d6d6d6"/>
<rect x="420.40" y="332.58" width="1" height="12.72" fill="#d6d6d6"/>
<rect x="420.40" y="344.80" width="1" height="12.72" fill="#d6d6d6"/>
<rect x="420.40" y="357.02" width="1" height="12.72" fill="#d6d6d6"/>
<rect x="420.40" y="369.24" width="1" height="12.72" fill="#d6d6d6"/>
<rect x="420.40" y="381.46" width="1" height="12.72" fill="#d6d6d6"/>
<rect x="420.40" y="393.68" width="1" height="12.72" fill="#d6d6d6"/>
<rect x="420.40" y="405.90" width="1" height="12.72" fill="#d6d6d6"/>
<rect x="420.40" y="418.12" width="1" height="12.72" fill="#d6d6d6"/>
<rect x="420.40" y="430.34" width="1" height="12.72" fill="#d6d6d6"/>
<rect x="420.40" y="442.56" width="1" height="12.72" fill="#d6d6d6"/>
<rect x="420.40" y="454.78" width="1" height="12.72" fill="#d6d6d6"/>
<rect x="420.40" y="467.00" width="1" height="12.72" fill="#d6d6d6"/>
<rect x="420.40" y="479.22" width="1" height="12.72" fill="#d6d6d6"/>
<rect x="420.40" y="491.44" width="1" height="12.72" fill="#d6d6d6"/>
<rect x="420.40" y="503.66" width="1" height="12.72" fill="#d6d6d6"/>
<rect x="420.40" y="515.88" width="1" height="12.72" fill="#d6d6d6"/>
<rect x="420.40" y="528.10" width="1" height="12.72" fill="#d6d6d6"/>
<rect x="420.40" y="540.32" width="1" height="12.72" fill="#d6d6d6"/>
<rect x="420.40" y="552.54" width="1" height="12.72" fill="#d6d6d6"/>
<rect x="420.40" y="564.76" width="1" height="12.72" fill="#d6d6d6"/>
<rect x="420.40" y="576.98" width="1" height="12.72" fill="#d6d6d6"/>
<rect x="420.40" y="589.20" width="1" height="12.72" fill="#d6d6d6"/>
<rect x="420.40" y="601.42" width="1" height="12.72" fill="#d6d6d6"/>
<rect x="420.40" y="613.64" width="1" height="12.72" fill="#d6d6d6"/>
<rect x="420.40" y="625.86" width="1" height="12.72" fill="#d6d6d6"/>
<rect x="420.40" y="150" width="1" height="12" fill="#cdcdcd"/>
<rect x="466.75" y="161.50" width="1" height="12.72" fill="#d6d6d6"/>
<rect x="466.75" y="173.72" width="1" height="12.72" fill="#d6d6d6"/>
<rect x="466.75" y="185.94" width="1" height="12.72" fill="#d6d6d6"/>
<rect x="466.75" y="198.16" width="1" height="12.72" fill="#d6d6d6"/>
<rect x="466.75" y="259.26" width="1" height="12.72" fill="#d6d6d6"/>
<rect x="466.75" y="271.48" width="1" height="12.72" fill="#d6d6d6"/>
<rect x="466.75" y="283.70" width="1" height="12.72" fill="#d6d6d6"/>
<rect x="466.75" y="295.92" width="1" height="12.72" fill="#d6d6d6"/>
<rect x="466.75" y="308.14" width="1" height="12.72" fill="#d6d6d6"/>
<rect x="466.75" y="320.36" width="1" height="12.72" fill="#d6d6d6"/>
<rect x="466.75" y="332.58" width="1" height="12.72" fill="#d6d6d6"/>
<rect x="466.75" y="344.80" width="1" height="12.72" fill="#d6d6d6"/>
<rect x="466.75" y="357.02" width="1" height="12.72" fill="#d6d6d6"/>
<rect x="466.75" y="369.24" width="1" height="12.72" fill="#d6d6d6"/>
<rect x="466.75" y="381.46" width="1" height="12.72" fill="#d6d6d6"/>
<rect x="466.75" y="393.68" width="1" height="12.72" fill="#d6d6d6"/>
<rect x="466.75" y="405.90" width="1" height="12.72" fill="#d6d6d6"/>
<rect x="466.75" y="418.12" width="1" height="12.72" fill="#d6d6d6"/>
<rect x="466.75" y="430.34" width="1" height="12.72" fill="#d6d6d6"/>
<rect x="466.75" y="442.56" width="1" height="12.72" fill="#d6d6d6"/>
<rect x="466.75" y="454.78" width="1" height="12.72" fill="#d6d6d6"/>
<rect x="466.75" y="467.00" width="1" height="12.72" fill="#d6d6d6"/>
<rect x="466.75" y="479.22" width="1" height="12.72" fill="#d6d6d6"/>
<rect x="466.75" y="491.44" width="1" height="12.72" fill="#d6d6d6"/>
<rect x="466.75" y="503.66" width="1" height="12.72" fill="#d6d6d6"/>
<rect x="466.75" y="515.88" width="1" height="12.72" fill="#d6d6d6"/>
<rect x="466.75" y="528.10" width="1" height="12.72" fill="#d6d6d6"/>
<rect x="466.75" y="540.32" width="1" height="12.72" fill="#d6d6d6"/>
<rect x="466.75" y="552.54" width="1" height="12.72" fill="#d6d6d6"/>
<rect x="466.75" y="564.76" width="1" height="12.72" fill="#d6d6d6"/>
<rect x="466.75" y="576.98" width="1" height="12.72" fill="#d6d6d6"/>
<rect x="466.75" y="589.20" width="1" height="12.72" fill="#d6d6d6"/>
<rect x="466.75" y="601.42" width="1" height="12.72" fill="#d6d6d6"/>
<rect x="466.75" y="613.64" width="1" height="12.72" fill="#d6d6d6"/>
<rect x="466.75" y="625.86" width="1" height="12.72" fill="#d6d6d6"/>
<rect x="466.75" y="150" width="1" height="12" fill="#cdcdcd"/>
<rect x="513.10" y="161.50" width="1" height="12.72" fill="#d6d6d6"/>
<rect x="513.10" y="173.72" width="1" height="12.72" fill="#d6d6d6"/>
<rect x="513.10" y="185.94" width="1" height="12.72" fill="#d6d6d6"/>
<rect x="513.10" y="198.16" width="1" height="12.72" fill="#d6d6d6"/>
<rect x="513.10" y="259.26" width="1" height="12.72" fill="#d6d6d6"/>
<rect x="513.10" y="271.48" width="1" height="12.72" fill="#d6d6d6"/>
<rect x="513.10" y="283.70" width="1" height="12.72" fill="#d6d6d6"/>
<rect x="513.10" y="295.92" width="1" height="12.72" fill="#d6d6d6"/>
<rect x="513.10" y="308.14" width="1" height="12.72" fill="#d6d6d6"/>
<rect x="513.10" y="320.36" width="1" height="12.72" fill="#d6d6d6"/>
<rect x="513.10" y="332.58" width="1" height="12.72" fill="#d6d6d6"/>
<rect x="513.10" y="344.80" width="1" height="12.72" fill="#d6d6d6"/>
<rect x="513.10" y="357.02" width="1" height="12.72" fill="#d6d6d6"/>
<rect x="513.10" y="369.24" width="1" height="12.72" fill="#d6d6d6"/>
<rect x="513.10" y="381.46" width="1" height="12.72" fill="#d6d6d6"/>
<rect x="513.10" y="393.68" width="1" height="12.72" fill="#d6d6d6"/>
<rect x="513.10" y="405.90" width="1" height="12.72" fill="#d6d6d6"/>
<rect x="513.10" y="418.12" width="1" height="12.72" fill="#d6d6d6"/>
<rect x="513.10" y="430.34" width="1" height="12.72" fill="#d6d6d6"/>
<rect x="513.10" y="442.56" width="1" height="12.72" fill="#d6d6d6"/>
<rect x="513.10" y="454.78" width="1" height="12.72" fill="#d6d6d6"/>
<rect x="513.10" y="467.00" width="1" height="12.72" fill="#d6d6d6"/>
<rect x="513.10" y="479.22" width="1" height="12.72" fill="#d6d6d6"/>
<rect x="513.10" y="491.44" width="1" height="12.72" fill="#d6d6d6"/>
<rect x="513.10" y="503.66" width="1" height="12.72" fill="#d6d6d6"/>
<rect x="513.10" y="515.88" width="1" height="12.72" fill="#d6d6d6"/>
<rect x="513.10" y="528.10" width="1" height="12.72" fill="#d6d6d6"/>
<rect x="513.10" y="540.32" width="1" height="12.72" fill="#d6d6d6"/>
<rect x="513.10" y="552.54" width="1" height="12.72" fill="#d6d6d6"/>
<rect x="513.10" y="564.76" width="1" height="12.72" fill="#d6d6d6"/>
<rect x="513.10" y="576.98" width="1" height="12.72" fill="#d6d6d6"/>
<rect x="513.10" y="589.20" width="1" height="12.72" fill="#d6d6d6"/>
<rect x="513.10" y="601.42" width="1" height="12.72" fill="#d6d6d6"/>
<rect x="513.10" y="613.64" width="1" height="12.72" fill="#d6d6d6"/>
<rect x="513.10" y="625.86" width="1" height="12.72" fill="#d6d6d6"/>
<rect x="513.10" y="150" width="1" height="12" fill="#cdcdcd"/>
<rect x="559.45" y="161.50" width="1" height="12.72" fill="#d6d6d6"/>
<rect x="559.45" y="173.72" width="1" height="12.72" fill="#d6d6d6"/>
<rect x="559.45" y="185.94" width="1" height="12.72" fill="#d6d6d6"/>
<rect x="559.45" y="198.16" width="1" height="12.72" fill="#d6d6d6"/>
<rect x="559.45" y="247.04" width="1" height="12.72" fill="#d6d6d6"/>
<rect x="559.45" y="259.26" width="1" height="12.72" fill="#d6d6d6"/>
<rect x="559.45" y="271.48" width="1" height="12.72" fill="#d6d6d6"/>
<rect x="559.45" y="283.70" width="1" height="12.72" fill="#d6d6d6"/>
<rect x="559.45" y="295.92" width="1" height="12.72" fill="#d6d6d6"/>
<rect x="559.45" y="308.14" width="1" height="12.72" fill="#d6d6d6"/>
<rect x="559.45" y="320.36" width="1" height="12.72" fill="#d6d6d6"/>
<rect x="559.45" y="332.58" width="1" height="12.72" fill="#d6d6d6"/>
<rect x="559.45" y="344.80" width="1" height="12.72" fill="#d6d6d6"/>
<rect x="559.45" y="357.02" width="1" height="12.72" fill="#d6d6d6"/>
<rect x="559.45" y="369.24" width="1" height="12.72" fill="#d6d6d6"/>
<rect x="559.45" y="381.46" width="1" height="12.72" fill="#d6d6d6"/>
<rect x="559.45" y="393.68" width="1" height="12.72" fill="#d6d6d6"/>
<rect x="559.45" y="405.90" width="1" height="12.72" fill="#d6d6d6"/>
<rect x="559.45" y="418.12" width="1" height="12.72" fill="#d6d6d6"/>
<rect x="559.45" y="430.34" width="1" height="12.72" fill="#d6d6d6"/>
<rect x="559.45" y="442.56" width="1" height="12.72" fill="#d6d6d6"/>
<rect x="559.45" y="454.78" width="1" height="12.72" fill="#d6d6d6"/>
<rect x="559.45" y="467.00" width="1" height="12.72" fill="#d6d6d6"/>
<rect x="559.45" y="479.22" width="1" height="12.72" fill="#d6d6d6"/>
<rect x="559.45" y="491.44" width="1" height="12.72" fill="#d6d6d6"/>
<rect x="559.45" y="503.66" width="1" height="12.72" fill="#d6d6d6"/>
<rect x="559.45" y="515.88" width="1" height="12.72" fill="#d6d6d6"/>
<rect x="559.45" y="528.10" width="1" height="12.72" fill="#d6d6d6"/>
<rect x="559.45" y="540.32" width="1" height="12.72" fill="#d6d6d6"/>
<rect x="559.45" y="552.54" width="1" height="12.72" fill="#d6d6d6"/>
<rect x="559.45" y="564.76" width="1" height="12.72" fill="#d6d6d6"/>
<rect x="559.45" y="576.98" width="1" height="12.72" fill="#d6d6d6"/>
<rect x="559.45" y="589.20" width="1" height="12.72" fill="#d6d6d6"/>
<rect x="559.45" y="601.42" width="1" height="12.72" fill="#d6d6d6"/>
<rect x="559.45" y="613.64" width="1" height="12.72" fill="#d6d6d6"/>
<rect x="559.45" y="625.86" width="1" height="12.72" fill="#d6d6d6"/>
<rect x="559.45" y="150" width="1" height="12" fill="#cdcdcd"/>
<rect x="605.80" y="161.50" width="1" height="12.72" fill="#d6d6d6"/>
<rect x="605.80" y="173.72" width="1" height="12.72" fill="#d6d6d6"/>
<rect x="605.80" y="185.94" width="1" height="12.72" fill="#d6d6d6"/>
<rect x="605.80" y="198.16" width="1" height="12.72" fill="#d6d6d6"/>
<rect x="605.80" y="247.04" width="1" height="12.72" fill="#d6d6d6"/>
<rect x="605.80" y="259.26" width="1" height="12.72" fill="#d6d6d6"/>
<rect x="605.80" y="271.48" width="1" height="12.72" fill="#d6d6d6"/>
<rect x="605.80" y="283.70" width="1" height="12.72" fill="#d6d6d6"/>
<rect x="605.80" y="295.92" width="1" height="12.72" fill="#d6d6d6"/>
<rect x="605.80" y="308.14" width="1" height="12.72" fill="#d6d6d6"/>
<rect x="605.80" y="320.36" width="1" height="12.72" fill="#d6d6d6"/>
<rect x="605.80" y="332.58" width="1" height="12.72" fill="#d6d6d6"/>
<rect x="605.80" y="344.80" width="1" height="12.72" fill="#d6d6d6"/>
<rect x="605.80" y="357.02" width="1" height="12.72" fill="#d6d6d6"/>
<rect x="605.80" y="369.24" width="1" height="12.72" fill="#d6d6d6"/>
<rect x="605.80" y="381.46" width="1" height="12.72" fill="#d6d6d6"/>
<rect x="605.80" y="393.68" width="1" height="12.72" fill="#d6d6d6"/>
<rect x="605.80" y="405.90" width="1" height="12.72" fill="#d6d6d6"/>
<rect x="605.80" y="418.12" width="1" height="12.72" fill="#d6d6d6"/>
<rect x="605.80" y="430.34" width="1" height="12.72" fill="#d6d6d6"/>
<rect x="605.80" y="442.56" width="1" height="12.72" fill="#d6d6d6"/>
<rect x="605.80" y="454.78" width="1" height="12.72" fill="#d6d6d6"/>
<rect x="605.80" y="467.00" width="1" height="12.72" fill="#d6d6d6"/>
<rect x="605.80" y="479.22" width="1" height="12.72" fill="#d6d6d6"/>
<rect x="605.80" y="491.44" width="1" height="12.72" fill="#d6d6d6"/>
<rect x="605.80" y="503.66" width="1" height="12.72" fill="#d6d6d6"/>
<rect x="605.80" y="515.88" width="1" height="12.72" fill="#d6d6d6"/>
<rect x="605.80" y="528.10" width="1" height="12.72" fill="#d6d6d6"/>
<rect x="605.80" y="540.32" width="1" height="12.72" fill="#d6d6d6"/>
<rect x="605.80" y="552.54" width="1" height="12.72" fill="#d6d6d6"/>
<rect x="605.80" y="564.76" width="1" height="12.72" fill="#d6d6d6"/>
<rect x="605.80" y="576.98" width="1" height="12.72" fill="#d6d6d6"/>
<rect x="605.80" y="589.20" width="1" height="12.72" fill="#d6d6d6"/>
<rect x="605.80" y="601.42" width="1" height="12.72" fill="#d6d6d6"/>
<rect x="605.80" y="613.64" width="1" height="12.72" fill="#d6d6d6"/>
<rect x="605.80" y="625.86" width="1" height="12.72" fill="#d6d6d6"/>
<rect x="605.80" y="150" width="1" height="12" fill="#cdcdcd"/>
<rect x="652.15" y="161.50" width="1" height="12.72" fill="#d6d6d6"/>
<rect x="652.15" y="173.72" width="1" height="12.72" fill="#d6d6d6"/>
<rect x="652.15" y="185.94" width="1" height="12.72" fill="#d6d6d6"/>
<rect x="652.15" y="198.16" width="1" height="12.72" fill="#d6d6d6"/>
<rect x="652.15" y="247.04" width="1" height="12.72" fill="#d6d6d6"/>
<rect x="652.15" y="259.26" width="1" height="12.72" fill="#d6d6d6"/>
<rect x="652.15" y="271.48" width="1" height="12.72" fill="#d6d6d6"/>
<rect x="652.15" y="283.70" width="1" height="12.72" fill="#d6d6d6"/>
<rect x="652.15" y="295.92" width="1" height="12.72" fill="#d6d6d6"/>
<rect x="652.15" y="308.14" width="1" height="12.72" fill="#d6d6d6"/>
<rect x="652.15" y="320.36" width="1" height="12.72" fill="#d6d6d6"/>
<rect x="652.15" y="332.58" width="1" height="12.72" fill="#d6d6d6"/>
<rect x="652.15" y="344.80" width="1" height="12.72" fill="#d6d6d6"/>
<rect x="652.15" y="357.02" width="1" height="12.72" fill="#d6d6d6"/>
<rect x="652.15" y="369.24" width="1" height="12.72" fill="#d6d6d6"/>
<rect x="652.15" y="381.46" width="1" height="12.72" fill="#d6d6d6"/>
<rect x="652.15" y="393.68" width="1" height="12.72" fill="#d6d6d6"/>
<rect x="652.15" y="405.90" width="1" height="12.72" fill="#d6d6d6"/>
<rect x="652.15" y="418.12" width="1" height="12.72" fill="#d6d6d6"/>
<rect x="652.15" y="430.34" width="1" height="12.72" fill="#d6d6d6"/>
<rect x="652.15" y="442.56" width="1" height="12.72" fill="#d6d6d6"/>
<rect x="652.15" y="454.78" width="1" height="12.72" fill="#d6d6d6"/>
<rect x="652.15" y="467.00" width="1" height="12.72" fill="#d6d6d6"/>
<rect x="652.15" y="479.22" width="1" height="12.72" fill="#d6d6d6"/>
<rect x="652.15" y="491.44" width="1" height="12.72" fill="#d6d6d6"/>
<rect x="652.15" y="503.66" width="1" height="12.72" fill="#d6d6d6"/>
<rect x="652.15" y="515.88" width="1" height="12.72" fill="#d6d6d6"/>
<rect x="652.15" y="528.10" width="1" height="12.72" fill="#d6d6d6"/>
<rect x="652.15" y="540.32" width="1" height="12.72" fill="#d6d6d6"/>
<rect x="652.15" y="552.54" width="1" height="12.72" fill="#d6d6d6"/>
<rect x="652.15" y="564.76" width="1" height="12.72" fill="#d6d6d6"/>
<rect x="652.15" y="576.98" width="1" height="12.72" fill="#d6d6d6"/>
<rect x="652.15" y="589.20" width="1" height="12.72" fill="#d6d6d6"/>
<rect x="652.15" y="601.42" width="1" height="12.72" fill="#d6d6d6"/>
<rect x="652.15" y="613.64" width="1" height="12.72" fill="#d6d6d6"/>
<rect x="652.15" y="625.86" width="1" height="12.72" fill="#d6d6d6"/>
<rect x="652.15" y="150" width="1" height="12" fill="#cdcdcd"/>
<rect x="698.50" y="161.50" width="1" height="12.72" fill="#d6d6d6"/>
<rect x="698.50" y="173.72" width="1" height="12.72" fill="#d6d6d6"/>
<rect x="698.50" y="185.94" width="1" height="12.72" fill="#d6d6d6"/>
<rect x="698.50" y="198.16" width="1" height="12.72" fill="#d6d6d6"/>
<rect x="698.50" y="234.82" width="1" height="12.72" fill="#d6d6d6"/>
<rect x="698.50" y="247.04" width="1" height="12.72" fill="#d6d6d6"/>
<rect x="698.50" y="259.26" width="1" height="12.72" fill="#d6d6d6"/>
<rect x="698.50" y="271.48" width="1" height="12.72" fill="#d6d6d6"/>
<rect x="698.50" y="283.70" width="1" height="12.72" fill="#d6d6d6"/>
<rect x="698.50" y="295.92" width="1" height="12.72" fill="#d6d6d6"/>
<rect x="698.50" y="308.14" width="1" height="12.72" fill="#d6d6d6"/>
<rect x="698.50" y="320.36" width="1" height="12.72" fill="#d6d6d6"/>
<rect x="698.50" y="332.58" width="1" height="12.72" fill="#d6d6d6"/>
<rect x="698.50" y="344.80" width="1" height="12.72" fill="#d6d6d6"/>
<rect x="698.50" y="357.02" width="1" height="12.72" fill="#d6d6d6"/>
<rect x="698.50" y="369.24" width="1" height="12.72" fill="#d6d6d6"/>
<rect x="698.50" y="381.46" width="1" height="12.72" fill="#d6d6d6"/>
<rect x="698.50" y="393.68" width="1" height="12.72" fill="#d6d6d6"/>
<rect x="698.50" y="405.90" width="1" height="12.72" fill="#d6d6d6"/>
<rect x="698.50" y="418.12" width="1" height="12.72" fill="#d6d6d6"/>
<rect x="698.50" y="430.34" width="1" height="12.72" fill="#d6d6d6"/>
<rect x="698.50" y="442.56" width="1" height="12.72" fill="#d6d6d6"/>
<rect x="698.50" y="454.78" width="1" height="12.72" fill="#d6d6d6"/>
<rect x="698.50" y="467.00" width="1" height="12.72" fill="#d6d6d6"/>
<rect x="698.50" y="479.22" width="1" height="12.72" fill="#d6d6d6"/>
<rect x="698.50" y="491.44" width="1" height="12.72" fill="#d6d6d6"/>
<rect x="698.50" y="503.66" width="1" height="12.72" fill="#d6d6d6"/>
<rect x="698.50" y="515.88" width="1" height="12.72" fill="#d6d6d6"/>
<rect x="698.50" y="528.10" width="1" height="12.72" fill="#d6d6d6"/>
<rect x="698.50" y="540.32" width="1" height="12.72" fill="#d6d6d6"/>
<rect x="698.50" y="552.54" width="1" height="12.72" fill="#d6d6d6"/>
<rect x="698.50" y="564.76" width="1" height="12.72" fill="#d6d6d6"/>
<rect x="698.50" y="576.98" width="1" height="12.72" fill="#d6d6d6"/>
<rect x="698.50" y="589.20" width="1" height="12.72" fill="#d6d6d6"/>
<rect x="698.50" y="601.42" width="1" height="12.72" fill="#d6d6d6"/>
<rect x="698.50" y="613.64" width="1" height="12.72" fill="#d6d6d6"/>
<rect x="698.50" y="625.86" width="1" height="12.72" fill="#d6d6d6"/>
<rect x="698.50" y="150" width="1" height="12" fill="#cdcdcd"/>
<rect x="744.85" y="161.50" width="1" height="12.72" fill="#d6d6d6"/>
<rect x="744.85" y="173.72" width="1" height="12.72" fill="#d6d6d6"/>
<rect x="744.85" y="185.94" width="1" height="12.72" fill="#d6d6d6"/>
<rect x="744.85" y="198.16" width="1" height="12.72" fill="#d6d6d6"/>
<rect x="744.85" y="222.60" width="1" height="12.72" fill="#d6d6d6"/>
<rect x="744.85" y="234.82" width="1" height="12.72" fill="#d6d6d6"/>
<rect x="744.85" y="247.04" width="1" height="12.72" fill="#d6d6d6"/>
<rect x="744.85" y="259.26" width="1" height="12.72" fill="#d6d6d6"/>
<rect x="744.85" y="271.48" width="1" height="12.72" fill="#d6d6d6"/>
<rect x="744.85" y="283.70" width="1" height="12.72" fill="#d6d6d6"/>
<rect x="744.85" y="295.92" width="1" height="12.72" fill="#d6d6d6"/>
<rect x="744.85" y="308.14" width="1" height="12.72" fill="#d6d6d6"/>
<rect x="744.85" y="320.36" width="1" height="12.72" fill="#d6d6d6"/>
<rect x="744.85" y="332.58" width="1" height="12.72" fill="#d6d6d6"/>
<rect x="744.85" y="344.80" width="1" height="12.72" fill="#d6d6d6"/>
<rect x="744.85" y="357.02" width="1" height="12.72" fill="#d6d6d6"/>
<rect x="744.85" y="369.24" width="1" height="12.72" fill="#d6d6d6"/>
<rect x="744.85" y="381.46" width="1" height="12.72" fill="#d6d6d6"/>
<rect x="744.85" y="393.68" width="1" height="12.72" fill="#d6d6d6"/>
<rect x="744.85" y="405.90" width="1" height="12.72" fill="#d6d6d6"/>
<rect x="744.85" y="418.12" width="1" height="12.72" fill="#d6d6d6"/>
<rect x="744.85" y="430.34" width="1" height="12.72" fill="#d6d6d6"/>
<rect x="744.85" y="442.56" width="1" height="12.72" fill="#d6d6d6"/>
<rect x="744.85" y="454.78" width="1" height="12.72" fill="#d6d6d6"/>
<rect x="744.85" y="467.00" width="1" height="12.72" fill="#d6d6d6"/>
<rect x="744.85" y="479.22" width="1" height="12.72" fill="#d6d6d6"/>
<rect x="744.85" y="491.44" width="1" height="12.72" fill="#d6d6d6"/>
<rect x="744.85" y="503.66" width="1" height="12.72" fill="#d6d6d6"/>
<rect x="744.85" y="515.88" width="1" height="12.72" fill="#d6d6d6"/>
<rect x="744.85" y="528.10" width="1" height="12.72" fill="#d6d6d6"/>
<rect x="744.85" y="540.32" width="1" height="12.72" fill="#d6d6d6"/>
<rect x="744.85" y="552.54" width="1" height="12.72" fill="#d6d6d6"/>
<rect x="744.85" y="564.76" width="1" height="12.72" fill="#d6d6d6"/>
<rect x="744.85" y="576.98" width="1" height="12.72" fill="#d6d6d6"/>
<rect x="744.85" y="589.20" width="1" height="12.72" fill="#d6d6d6"/>
<rect x="744.85" y="601.42" width="1" height="12.72" fill="#d6d6d6"/>
<rect x="744.85" y="613.64" width="1" height="12.72" fill="#d6d6d6"/>
<rect x="744.85" y="625.86" width="1" height="12.72" fill="#d6d6d6"/>
<rect x="744.85" y="150" width="1" height="12" fill="#cdcdcd"/>
<rect x="791.20" y="161.50" width="1" height="12.72" fill="#d6d6d6"/>
<rect x="791.20" y="173.72" width="1" height="12.72" fill="#d6d6d6"/>
<rect x="791.20" y="185.94" width="1" height="12.72" fill="#d6d6d6"/>
<rect x="791.20" y="198.16" width="1" height="12.72" fill="#d6d6d6"/>
<rect x="791.20" y="222.60" width="1" height="12.72" fill="#d6d6d6"/>
<rect x="791.20" y="234.82" width="1" height="12.72" fill="#d6d6d6"/>
<rect x="791.20" y="247.04" width="1" height="12.72" fill="#d6d6d6"/>
<rect x="791.20" y="259.26" width="1" height="12.72" fill="#d6d6d6"/>
<rect x="791.20" y="271.48" width="1" height="12.72" fill="#d6d6d6"/>
<rect x="791.20" y="283.70" width="1" height="12.72" fill="#d6d6d6"/>
<rect x="791.20" y="295.92" width="1" height="12.72" fill="#d6d6d6"/>
<rect x="791.20" y="308.14" width="1" height="12.72" fill="#d6d6d6"/>
<rect x="791.20" y="320.36" width="1" height="12.72" fill="#d6d6d6"/>
<rect x="791.20" y="332.58" width="1" height="12.72" fill="#d6d6d6"/>
<rect x="791.20" y="344.80" width="1" height="12.72" fill="#d6d6d6"/>
<rect x="791.20" y="357.02" width="1" height="12.72" fill="#d6d6d6"/>
<rect x="791.20" y="369.24" width="1" height="12.72" fill="#d6d6d6"/>
<rect x="791.20" y="381.46" width="1" height="12.72" fill="#d6d6d6"/>
<rect x="791.20" y="393.68" width="1" height="12.72" fill="#d6d6d6"/>
<rect x="791.20" y="405.90" width="1" height="12.72" fill="#d6d6d6"/>
<rect x="791.20" y="418.12" width="1" height="12.72" fill="#d6d6d6"/>
<rect x="791.20" y="430.34" width="1" height="12.72" fill="#d6d6d6"/>
<rect x="791.20" y="442.56" width="1" height="12.72" fill="#d6d6d6"/>
<rect x="791.20" y="454.78" width="1" height="12.72" fill="#d6d6d6"/>
<rect x="791.20" y="467.00" width="1" height="12.72" fill="#d6d6d6"/>
<rect x="791.20" y="479.22" width="1" height="12.72" fill="#d6d6d6"/>
<rect x="791.20" y="491.44" width="1" height="12.72" fill="#d6d6d6"/>
<rect x="791.20" y="503.66" width="1" height="12.72" fill="#d6d6d6"/>
<rect x="791.20" y="515.88" width="1" height="12.72" fill="#d6d6d6"/>
<rect x="791.20" y="528.10" width="1" height="12.72" fill="#d6d6d6"/>
<rect x="791.20" y="540.32" width="1" height="12.72" fill="#d6d6d6"/>
<rect x="791.20" y="552.54" width="1" height="12.72" fill="#d6d6d6"/>
<rect x="791.20" y="564.76" width="1" height="12.72" fill="#d6d6d6"/>
<rect x="791.20" y="576.98" width="1" height="12.72" fill="#d6d6d6"/>
<rect x="791.20" y="589.20" width="1" height="12.72" fill="#d6d6d6"/>
<rect x="791.20" y="601.42" width="1" height="12.72" fill="#d6d6d6"/>
<rect x="791.20" y="613.64" width="1" height="12.72" fill="#d6d6d6"/>
<rect x="791.20" y="625.86" width="1" height="12.72" fill="#d6d6d6"/>
<rect x="791.20" y="150" width="1" height="12" fill="#cdcdcd"/>
<rect x="837.55" y="161.50" width="1" height="12.72" fill="#d6d6d6"/>
<rect x="837.55" y="173.72" width="1" height="12.72" fill="#d6d6d6"/>
<rect x="837.55" y="185.94" width="1" height="12.72" fill="#d6d6d6"/>
<rect x="837.55" y="198.16" width="1" height="12.72" fill="#d6d6d6"/>
<rect x="837.55" y="210.38" width="1" height="12.72" fill="#d6d6d6"/>
<rect x="837.55" y="222.60" width="1" height="12.72" fill="#d6d6d6"/>
<rect x="837.55" y="234.82" width="1" height="12.72" fill="#d6d6d6"/>
<rect x="837.55" y="247.04" width="1" height="12.72" fill="#d6d6d6"/>
<rect x="837.55" y="259.26" width="1" height="12.72" fill="#d6d6d6"/>
<rect x="837.55" y="271.48" width="1" height="12.72" fill="#d6d6d6"/>
<rect x="837.55" y="283.70" width="1" height="12.72" fill="#d6d6d6"/>
<rect x="837.55" y="295.92" width="1" height="12.72" fill="#d6d6d6"/>
<rect x="837.55" y="308.14" width="1" height="12.72" fill="#d6d6d6"/>
<rect x="837.55" y="320.36" width="1" height="12.72" fill="#d6d6d6"/>
<rect x="837.55" y="332.58" width="1" height="12.72" fill="#d6d6d6"/>
<rect x="837.55" y="344.80" width="1" height="12.72" fill="#d6d6d6"/>
<rect x="837.55" y="357.02" width="1" height="12.72" fill="#d6d6d6"/>
<rect x="837.55" y="369.24" width="1" height="12.72" fill="#d6d6d6"/>
<rect x="837.55" y="381.46" width="1" height="12.72" fill="#d6d6d6"/>
<rect x="837.55" y="393.68" width="1" height="12.72" fill="#d6d6d6"/>
<rect x="837.55" y="405.90" width="1" height="12.72" fill="#d6d6d6"/>
<rect x="837.55" y="418.12" width="1" height="12.72" fill="#d6d6d6"/>
<rect x="837.55" y="430.34" width="1" height="12.72" fill="#d6d6d6"/>
<rect x="837.55" y="442.56" width="1" height="12.72" fill="#d6d6d6"/>
<rect x="837.55" y="454.78" width="1" height="12.72" fill="#d6d6d6"/>
<rect x="837.55" y="467.00" width="1" height="12.72" fill="#d6d6d6"/>
<rect x="837.55" y="479.22" width="1" height="12.72" fill="#d6d6d6"/>
<rect x="837.55" y="491.44" width="1" height="12.72" fill="#d6d6d6"/>
<rect x="837.55" y="503.66" width="1" height="12.72" fill="#d6d6d6"/>
<rect x="837.55" y="515.88" width="1" height="12.72" fill="#d6d6d6"/>
<rect x="837.55" y="528.10" width="1" height="12.72" fill="#d6d6d6"/>
<rect x="837.55" y="540.32" width="1" height="12.72" fill="#d6d6d6"/>
<rect x="837.55" y="552.54" width="1" height="12.72" fill="#d6d6d6"/>
<rect x="837.55" y="564.76" width="1" height="12.72" fill="#d6d6d6"/>
<rect x="837.55" y="576.98" width="1" height="12.72" fill="#d6d6d6"/>
<rect x="837.55" y="589.20" width="1" height="12.72" fill="#d6d6d6"/>
<rect x="837.55" y="601.42" width="1" height="12.72" fill="#d6d6d6"/>
<rect x="837.55" y="613.64" width="1" height="12.72" fill="#d6d6d6"/>
<rect x="837.55" y="625.86" width="1" height="12.72" fill="#d6d6d6"/>
<rect x="837.55" y="150" width="1" height="12" fill="#cdcdcd"/>
<rect x="883.90" y="161.50" width="1" height="12.72" fill="#d6d6d6"/>
<rect x="883.90" y="173.72" width="1" height="12.72" fill="#d6d6d6"/>
<rect x="883.90" y="185.94" width="1" height="12.72" fill="#d6d6d6"/>
<rect x="883.90" y="198.16" width="1" height="12.72" fill="#d6d6d6"/>
<rect x="883.90" y="210.38" width="1" height="12.72" fill="#d6d6d6"/>
<rect x="883.90" y="222.60" width="1" height="12.72" fill="#d6d6d6"/>
<rect x="883.90" y="234.82" width="1" height="12.72" fill="#d6d6d6"/>
<rect x="883.90" y="247.04" width="1" height="12.72" fill="#d6d6d6"/>
<rect x="883.90" y="259.26" width="1" height="12.72" fill="#d6d6d6"/>
<rect x="883.90" y="271.48" width="1" height="12.72" fill="#d6d6d6"/>
<rect x="883.90" y="283.70" width="1" height="12.72" fill="#d6d6d6"/>
<rect x="883.90" y="295.92" width="1" height="12.72" fill="#d6d6d6"/>
<rect x="883.90" y="308.14" width="1" height="12.72" fill="#d6d6d6"/>
<rect x="883.90" y="320.36" width="1" height="12.72" fill="#d6d6d6"/>
<rect x="883.90" y="332.58" width="1" height="12.72" fill="#d6d6d6"/>
<rect x="883.90" y="344.80" width="1" height="12.72" fill="#d6d6d6"/>
<rect x="883.90" y="357.02" width="1" height="12.72" fill="#d6d6d6"/>
<rect x="883.90" y="369.24" width="1" height="12.72" fill="#d6d6d6"/>
<rect x="883.90" y="381.46" width="1" height="12.72" fill="#d6d6d6"/>
<rect x="883.90" y="393.68" width="1" height="12.72" fill="#d6d6d6"/>
<rect x="883.90" y="405.90" width="1" height="12.72" fill="#d6d6d6"/>
<rect x="883.90" y="418.12" width="1" height="12.72" fill="#d6d6d6"/>
<rect x="883.90" y="430.34" width="1" height="12.72" fill="#d6d6d6"/>
<rect x="883.90" y="442.56" width="1" height="12.72" fill="#d6d6d6"/>
<rect x="883.90" y="454.78" width="1" height="12.72" fill="#d6d6d6"/>
<rect x="883.90" y="467.00" width="1" height="12.72" fill="#d6d6d6"/>
<rect x="883.90" y="479.22" width="1" height="12.72" fill="#d6d6d6"/>
<rect x="883.90" y="491.44" width="1" height="12.72" fill="#d6d6d6"/>
<rect x="883.90" y="503.66" width="1" height="12.72" fill="#d6d6d6"/>
<rect x="883.90" y="515.88" width="1" height="12.72" fill="#d6d6d6"/>
<rect x="883.90" y="528.10" width="1" height="12.72" fill="#d6d6d6"/>
<rect x="883.90" y="540.32" width="1" height="12.72" fill="#d6d6d6"/>
<rect x="883.90" y="552.54" width="1" height="12.72" fill="#d6d6d6"/>
<rect x="883.90" y="564.76" width="1" height="12.72" fill="#d6d6d6"/>
<rect x="883.90" y="576.98" width="1" height="12.72" fill="#d6d6d6"/>
<rect x="883.90" y="589.20" width="1" height="12.72" fill="#d6d6d6"/>
<rect x="883.90" y="601.42" width="1" height="12.72" fill="#d6d6d6"/>
<rect x="883.90" y="613.64" width="1" height="12.72" fill="#d6d6d6"/>
<rect x="883.90" y="625.86" width="1" height="12.72" fill="#d6d6d6"/>
<rect x="883.90" y="150" width="1" height="12" fill="#cdcdcd"/>
<rect x="930.25" y="161.50" width="1" height="12.72" fill="#d6d6d6"/>
<rect x="930.25" y="173.72" width="1" height="12.72" fill="#d6d6d6"/>
<rect x="930.25" y="185.94" width="1" height="12.72" fill="#d6d6d6"/>
<rect x="930.25" y="198.16" width="1" height="12.72" fill="#d6d6d6"/>
<rect x="930.25" y="210.38" width="1" height="12.72" fill="#d6d6d6"/>
<rect x="930.25" y="222.60" width="1" height="12.72" fill="#d6d6d6"/>
<rect x="930.25" y="234.82" width="1" height="12.72" fill="#d6d6d6"/>
<rect x="930.25" y="247.04" width="1" height="12.72" fill="#d6d6d6"/>
<rect x="930.25" y="259.26" width="1" height="12.72" fill="#d6d6d6"/>
<rect x="930.25" y="271.48" width="1" height="12.72" fill="#d6d6d6"/>
<rect x="930.25" y="283.70" width="1" height="12.72" fill="#d6d6d6"/>
<rect x="930.25" y="295.92" width="1" height="12.72" fill="#d6d6d6"/>
<rect x="930.25" y="308.14" width="1" height="12.72" fill="#d6d6d6"/>
<rect x="930.25" y="320.36" width="1" height="12.72" fill="#d6d6d6"/>
<rect x="930.25" y="332.58" width="1" height="12.72" fill="#d6d6d6"/>
<rect x="930.25" y="344.80" width="1" height="12.72" fill="#d6d6d6"/>
<rect x="930.25" y="357.02" width="1" height="12.72" fill="#d6d6d6"/>
<rect x="930.25" y="369.24" width="1" height="12.72" fill="#d6d6d6"/>
<rect x="930.25" y="381.46" width="1" height="12.72" fill="#d6d6d6"/>
<rect x="930.25" y="393.68" width="1" height="12.72" fill="#d6d6d6"/>
<rect x="930.25" y="405.90" width="1" height="12.72" fill="#d6d6d6"/>
<rect x="930.25" y="418.12" width="1" height="12.72" fill="#d6d6d6"/>
<rect x="930.25" y="430.34" width="1" height="12.72" fill="#d6d6d6"/>
<rect x="930.25" y="442.56" width="1" height="12.72" fill="#d6d6d6"/>
<rect x="930.25" y="454.78" width="1" height="12.72" fill="#d6d6d6"/>
<rect x="930.25" y="467.00" width="1" height="12.72" fill="#d6d6d6"/>
<rect x="930.25" y="479.22" width="1" height="12.72" fill="#d6d6d6"/>
<rect x="930.25" y="491.44" width="1" height="12.72" fill="#d6d6d6"/>
<rect x="930.25" y="503.66" width="1" height="12.72" fill="#d6d6d6"/>
<rect x="930.25" y="515.88" width="1" height="12.72" fill="#d6d6d6"/>
<rect x="930.25" y="528.10" width="1" height="12.72" fill="#d6d6d6"/>
<rect x="930.25" y="540.32" width="1" height="12.72" fill="#d6d6d6"/>
<rect x="930.25" y="552.54" width="1" height="12.72" fill="#d6d6d6"/>
<rect x="930.25" y="564.76" width="1" height="12.72" fill="#d6d6d6"/>
<rect x="930.25" y="576.98" width="1" height="12.72" fill="#d6d6d6"/>
<rect x="930.25" y="589.20" width="1" height="12.72" fill="#d6d6d6"/>
<rect x="930.25" y="601.42" width="1" height="12.72" fill="#d6d6d6"/>
<rect x="930.25" y="613.64" width="1" height="12.72" fill="#d6d6d6"/>
<rect x="930.25" y="625.86" width="1" height="12.72" fill="#d6d6d6"/>
<rect x="930.25" y="150" width="1" height="12" fill="#cdcdcd"/>
<rect x="976.60" y="161.50" width="1" height="12.72" fill="#d6d6d6"/>
<rect x="976.60" y="173.72" width="1" height="12.72" fill="#d6d6d6"/>
<rect x="976.60" y="185.94" width="1" height="12.72" fill="#d6d6d6"/>
<rect x="976.60" y="198.16" width="1" height="12.72" fill="#d6d6d6"/>
<rect x="976.60" y="210.38" width="1" height="12.72" fill="#d6d6d6"/>
<rect x="976.60" y="222.60" width="1" height="12.72" fill="#d6d6d6"/>
<rect x="976.60" y="234.82" width="1" height="12.72" fill="#d6d6d6"/>
<rect x="976.60" y="247.04" width="1" height="12.72" fill="#d6d6d6"/>
<rect x="976.60" y="259.26" width="1" height="12.72" fill="#d6d6d6"/>
<rect x="976.60" y="271.48" width="1" height="12.72" fill="#d6d6d6"/>
<rect x="976.60" y="283.70" width="1" height="12.72" fill="#d6d6d6"/>
<rect x="976.60" y="295.92" width="1" height="12.72" fill="#d6d6d6"/>
<rect x="976.60" y="308.14" width="1" height="12.72" fill="#d6d6d6"/>
<rect x="976.60" y="320.36" width="1" height="12.72" fill="#d6d6d6"/>
<rect x="976.60" y="332.58" width="1" height="12.72" fill="#d6d6d6"/>
<rect x="976.60" y="344.80" width="1" height="12.72" fill="#d6d6d6"/>
<rect x="976.60" y="357.02" width="1" height="12.72" fill="#d6d6d6"/>
<rect x="976.60" y="369.24" width="1" height="12.72" fill="#d6d6d6"/>
<rect x="976.60" y="381.46" width="1" height="12.72" fill="#d6d6d6"/>
<rect x="976.60" y="393.68" width="1" height="12.72" fill="#d6d6d6"/>
<rect x="976.60" y="405.90" width="1" height="12.72" fill="#d6d6d6"/>
<rect x="976.60" y="418.12" width="1" height="12.72" fill="#d6d6d6"/>
<rect x="976.60" y="430.34" width="1" height="12.72" fill="#d6d6d6"/>
<rect x="976.60" y="442.56" width="1" height="12.72" fill="#d6d6d6"/>
<rect x="976.60" y="454.78" width="1" height="12.72" fill="#d6d6d6"/>
<rect x="976.60" y="467.00" width="1" height="12.72" fill="#d6d6d6"/>
<rect x="976.60" y="479.22" width="1" height="12.72" fill="#d6d6d6"/>
<rect x="976.60" y="491.44" width="1" height="12.72" fill="#d6d6d6"/>
<rect x="976.60" y="503.66" width="1" height="12.72" fill="#d6d6d6"/>
<rect x="976.60" y="515.88" width="1" height="12.72" fill="#d6d6d6"/>
<rect x="976.60" y="528.10" width="1" height="12.72" fill="#d6d6d6"/>
<rect x="976.60" y="540.32" width="1" height="12.72" fill="#d6d6d6"/>
<rect x="976.60" y="552.54" width="1" height="12.72" fill="#d6d6d6"/>
<rect x="976.60" y="564.76" width="1" height="12.72" fill="#d6d6d6"/>
<rect x="976.60" y="576.98" width="1" height="12.72" fill="#d6d6d6"/>
<rect x="976.60" y="589.20" width="1" height="12.72" fill="#d6d6d6"/>
<rect x="976.60" y="601.42" width="1" height="12.72" fill="#d6d6d6"/>
<rect x="976.60" y="613.64" width="1" height="12.72" fill="#d6d6d6"/>
<rect x="976.60" y="625.86" width="1" height="12.72" fill="#d6d6d6"/>
<rect x="976.60" y="150" width="1" height="12" fill="#cdcdcd"/>
<rect x="1022.95" y="161.50" width="1" height="12.72" fill="#d6d6d6"/>
<rect x="1022.95" y="173.72" width="1" height="12.72" fill="#d6d6d6"/>
<rect x="1022.95" y="185.94" width="1" height="12.72" fill="#d6d6d6"/>
<rect x="1022.95" y="198.16" width="1" height="12.72" fill="#d6d6d6"/>
<rect x="1022.95" y="210.38" width="1" height="12.72" fill="#d6d6d6"/>
<rect x="1022.95" y="222.60" width="1" height="12.72" fill="#d6d6d6"/>
<rect x="1022.95" y="234.82" width="1" height="12.72" fill="#d6d6d6"/>
<rect x="1022.95" y="247.04" width="1" height="12.72" fill="#d6d6d6"/>
<rect x="1022.95" y="259.26" width="1" height="12.72" fill="#d6d6d6"/>
<rect x="1022.95" y="271.48" width="1" height="12.72" fill="#d6d6d6"/>
<rect x="1022.95" y="283.70" width="1" height="12.72" fill="#d6d6d6"/>
<rect x="1022.95" y="295.92" width="1" height="12.72" fill="#d6d6d6"/>
<rect x="1022.95" y="308.14" width="1" height="12.72" fill="#d6d6d6"/>
<rect x="1022.95" y="320.36" width="1" height="12.72" fill="#d6d6d6"/>
<rect x="1022.95" y="332.58" width="1" height="12.72" fill="#d6d6d6"/>
<rect x="1022.95" y="344.80" width="1" height="12.72" fill="#d6d6d6"/>
<rect x="1022.95" y="357.02" width="1" height="12.72" fill="#d6d6d6"/>
<rect x="1022.95" y="369.24" width="1" height="12.72" fill="#d6d6d6"/>
<rect x="1022.95" y="381.46" width="1" height="12.72" fill="#d6d6d6"/>
<rect x="1022.95" y="393.68" width="1" height="12.72" fill="#d6d6d6"/>
<rect x="1022.95" y="405.90" width="1" height="12.72" fill="#d6d6d6"/>
<rect x="1022.95" y="418.12" width="1" height="12.72" fill="#d6d6d6"/>
<rect x="1022.95" y="430.34" width="1" height="12.72" fill="#d6d6d6"/>
<rect x="1022.95" y="442.56" width="1" height="12.72" fill="#d6d6d6"/>
<rect x="1022.95" y="454.78" width="1" height="12.72" fill="#d6d6d6"/>
<rect x="1022.95" y="467.00" width="1" height="12.72" fill="#d6d6d6"/>
<rect x="1022.95" y="479.22" width="1" height="12.72" fill="#d6d6d6"/>
<rect x="1022.95" y="491.44" width="1" height="12.72" fill="#d6d6d6"/>
<rect x="1022.95" y="503.66" width="1" height="12.72" fill="#d6d6d6"/>
<rect x="1022.95" y="515.88" width="1" height="12.72" fill="#d6d6d6"/>
<rect x="1022.95" y="528.10" width="1" height="12.72" fill="#d6d6d6"/>
<rect x="1022.95" y="540.32" width="1" height="12.72" fill="#d6d6d6"/>
<rect x="1022.95" y="552.54" width="1" height="12.72" fill="#d6d6d6"/>
<rect x="1022.95" y="564.76" width="1" height="12.72" fill="#d6d6d6"/>
<rect x="1022.95" y="576.98" width="1" height="12.72" fill="#d6d6d6"/>
<rect x="1022.95" y="589.20" width="1" height="12.72" fill="#d6d6d6"/>
<rect x="1022.95" y="601.42" width="1" height="12.72" fill="#d6d6d6"/>
<rect x="1022.95" y="613.64" width="1" height="12.72" fill="#d6d6d6"/>
<rect x="1022.95" y="625.86" width="1" height="12.72" fill="#d6d6d6"/>
<rect x="1022.95" y="150" width="1" height="12" fill="#cdcdcd"/>
<rect x="1069.30" y="161.50" width="1" height="12.72" fill="#d6d6d6"/>
<rect x="1069.30" y="173.72" width="1" height="12.72" fill="#d6d6d6"/>
<rect x="1069.30" y="185.94" width="1" height="12.72" fill="#d6d6d6"/>
<rect x="1069.30" y="198.16" width="1" height="12.72" fill="#d6d6d6"/>
<rect x="1069.30" y="210.38" width="1" height="12.72" fill="#d6d6d6"/>
<rect x="1069.30" y="222.60" width="1" height="12.72" fill="#d6d6d6"/>
<rect x="1069.30" y="234.82" width="1" height="12.72" fill="#d6d6d6"/>
<rect x="1069.30" y="247.04" width="1" height="12.72" fill="#d6d6d6"/>
<rect x="1069.30" y="259.26" width="1" height="12.72" fill="#d6d6d6"/>
<rect x="1069.30" y="271.48" width="1" height="12.72" fill="#d6d6d6"/>
<rect x="1069.30" y="283.70" width="1" height="12.72" fill="#d6d6d6"/>
<rect x="1069.30" y="295.92" width="1" height="12.72" fill="#d6d6d6"/>
<rect x="1069.30" y="308.14" width="1" height="12.72" fill="#d6d6d6"/>
<rect x="1069.30" y="320.36" width="1" height="12.72" fill="#d6d6d6"/>
<rect x="1069.30" y="332.58" width="1" height="12.72" fill="#d6d6d6"/>
<rect x="1069.30" y="344.80" width="1" height="12.72" fill="#d6d6d6"/>
<rect x="1069.30" y="357.02" width="1" height="12.72" fill="#d6d6d6"/>
<rect x="1069.30" y="369.24" width="1" height="12.72" fill="#d6d6d6"/>
<rect x="1069.30" y="381.46" width="1" height="12.72" fill="#d6d6d6"/>
<rect x="1069.30" y="393.68" width="1" height="12.72" fill="#d6d6d6"/>
<rect x="1069.30" y="405.90" width="1" height="12.72" fill="#d6d6d6"/>
<rect x="1069.30" y="418.12" width="1" height="12.72" fill="#d6d6d6"/>
<rect x="1069.30" y="430.34" width="1" height="12.72" fill="#d6d6d6"/>
<rect x="1069.30" y="442.56" width="1" height="12.72" fill="#d6d6d6"/>
<rect x="1069.30" y="454.78" width="1" height="12.72" fill="#d6d6d6"/>
<rect x="1069.30" y="467.00" width="1" height="12.72" fill="#d6d6d6"/>
<rect x="1069.30" y="479.22" width="1" height="12.72" fill="#d6d6d6"/>
<rect x="1069.30" y="491.44" width="1" height="12.72" fill="#d6d6d6"/>
<rect x="1069.30" y="503.66" width="1" height="12.72" fill="#d6d6d6"/>
<rect x="1069.30" y="515.88" width="1" height="12.72" fill="#d6d6d6"/>
<rect x="1069.30" y="528.10" width="1" height="12.72" fill="#d6d6d6"/>
<rect x="1069.30" y="540.32" width="1" height="12.72" fill="#d6d6d6"/>
<rect x="1069.30" y="552.54" width="1" height="12.72" fill="#d6d6d6"/>
<rect x="1069.30" y="564.76" width="1" height="12.72" fill="#d6d6d6"/>
<rect x="1069.30" y="576.98" width="1" height="12.72" fill="#d6d6d6"/>
<rect x="1069.30" y="589.20" width="1" height="12.72" fill="#d6d6d6"/>
<rect x="1069.30" y="601.42" width="1" height="12.72" fill="#d6d6d6"/>
<rect x="1069.30" y="613.64" width="1" height="12.72" fill="#d6d6d6"/>
<rect x="1069.30" y="625.86" width="1" height="12.72" fill="#d6d6d6"/>
<rect x="1069.30" y="150" width="1" height="12" fill="#cdcdcd"/>
<rect x="1115.65" y="161.50" width="1" height="12.72" fill="#d6d6d6"/>
<rect x="1115.65" y="173.72" width="1" height="12.72" fill="#d6d6d6"/>
<rect x="1115.65" y="185.94" width="1" height="12.72" fill="#d6d6d6"/>
<rect x="1115.65" y="198.16" width="1" height="12.72" fill="#d6d6d6"/>
<rect x="1115.65" y="210.38" width="1" height="12.72" fill="#d6d6d6"/>
<rect x="1115.65" y="222.60" width="1" height="12.72" fill="#d6d6d6"/>
<rect x="1115.65" y="234.82" width="1" height="12.72" fill="#d6d6d6"/>
<rect x="1115.65" y="247.04" width="1" height="12.72" fill="#d6d6d6"/>
<rect x="1115.65" y="259.26" width="1" height="12.72" fill="#d6d6d6"/>
<rect x="1115.65" y="271.48" width="1" height="12.72" fill="#d6d6d6"/>
<rect x="1115.65" y="283.70" width="1" height="12.72" fill="#d6d6d6"/>
<rect x="1115.65" y="295.92" width="1" height="12.72" fill="#d6d6d6"/>
<rect x="1115.65" y="308.14" width="1" height="12.72" fill="#d6d6d6"/>
<rect x="1115.65" y="320.36" width="1" height="12.72" fill="#d6d6d6"/>
<rect x="1115.65" y="332.58" width="1" height="12.72" fill="#d6d6d6"/>
<rect x="1115.65" y="344.80" width="1" height="12.72" fill="#d6d6d6"/>
<rect x="1115.65" y="357.02" width="1" height="12.72" fill="#d6d6d6"/>
<rect x="1115.65" y="369.24" width="1" height="12.72" fill="#d6d6d6"/>
<rect x="1115.65" y="381.46" width="1" height="12.72" fill="#d6d6d6"/>
<rect x="1115.65" y="393.68" width="1" height="12.72" fill="#d6d6d6"/>
<rect x="1115.65" y="405.90" width="1" height="12.72" fill="#d6d6d6"/>
<rect x="1115.65" y="418.12" width="1" height="12.72" fill="#d6d6d6"/>
<rect x="1115.65" y="430.34" width="1" height="12.72" fill="#d6d6d6"/>
<rect x="1115.65" y="442.56" width="1" height="12.72" fill="#d6d6d6"/>
<rect x="1115.65" y="454.78" width="1" height="12.72" fill="#d6d6d6"/>
<rect x="1115.65" y="467.00" width="1" height="12.72" fill="#d6d6d6"/>
<rect x="1115.65" y="479.22" width="1" height="12.72" fill="#d6d6d6"/>
<rect x="1115.65" y="491.44" width="1" height="12.72" fill="#d6d6d6"/>
<rect x="1115.65" y="503.66" width="1" height="12.72" fill="#d6d6d6"/>
<rect x="1115.65" y="515.88" width="1" height="12.72" fill="#d6d6d6"/>
<rect x="1115.65" y="528.10" width="1" height="12.72" fill="#d6d6d6"/>
<rect x="1115.65" y="540.32" width="1" height="12.72" fill="#d6d6d6"/>
<rect x="1115.65" y="552.54" width="1" height="12.72" fill="#d6d6d6"/>
<rect x="1115.65" y="564.76" width="1" height="12.72" fill="#d6d6d6"/>
<rect x="1115.65" y="576.98" width="1" height="12.72" fill="#d6d6d6"/>
<rect x="1115.65" y="589.20" width="1" height="12.72" fill="#d6d6d6"/>
<rect x="1115.65" y="601.42" width="1" height="12.72" fill="#d6d6d6"/>
<rect x="1115.65" y="613.64" width="1" height="12.72" fill="#d6d6d6"/>
<rect x="1115.65" y="625.86" width="1" height="12.72" fill="#d6d6d6"/>
<rect x="1115.65" y="150" width="1" height="12" fill="#cdcdcd"/>
<rect x="1162.00" y="161.50" width="1" height="12.72" fill="#d6d6d6"/>
<rect x="1162.00" y="173.72" width="1" height="12.72" fill="#d6d6d6"/>
<rect x="1162.00" y="185.94" width="1" height="12.72" fill="#d6d6d6"/>
<rect x="1162.00" y="198.16" width="1" height="12.72" fill="#d6d6d6"/>
<rect x="1162.00" y="210.38" width="1" height="12.72" fill="#d6d6d6"/>
<rect x="1162.00" y="222.60" width="1" height="12.72" fill="#d6d6d6"/>
<rect x="1162.00" y="234.82" width="1" height="12.72" fill="#d6d6d6"/>
<rect x="1162.00" y="247.04" width="1" height="12.72" fill="#d6d6d6"/>
<rect x="1162.00" y="259.26" width="1" height="12.72" fill="#d6d6d6"/>
<rect x="1162.00" y="271.48" width="1" height="12.72" fill="#d6d6d6"/>
<rect x="1162.00" y="283.70" width="1" height="12.72" fill="#d6d6d6"/>
<rect x="1162.00" y="295.92" width="1" height="12.72" fill="#d6d6d6"/>
<rect x="1162.00" y="308.14" width="1" height="12.72" fill="#d6d6d6"/>
<rect x="1162.00" y="320.36" width="1" height="12.72" fill="#d6d6d6"/>
<rect x="1162.00" y="332.58" width="1" height="12.72" fill="#d6d6d6"/>
<rect x="1162.00" y="344.80" width="1" height="12.72" fill="#d6d6d6"/>
<rect x="1162.00" y="357.02" width="1" height="12.72" fill="#d6d6d6"/>
<rect x="1162.00" y="369.24" width="1" height="12.72" fill="#d6d6d6"/>
<rect x="1162.00" y="381.46" width="1" height="12.72" fill="#d6d6d6"/>
<rect x="1162.00" y="393.68" width="1" height="12.72" fill="#d6d6d6"/>
<rect x="1162.00" y="405.90" width="1" height="12.72" fill="#d6d6d6"/>
<rect x="1162.00" y="418.12" width="1" height="12.72" fill="#d6d6d6"/>
<rect x="1162.00" y="430.34" width="1" height="12.72" fill="#d6d6d6"/>
<rect x="1162.00" y="442.56" width="1" height="12.72" fill="#d6d6d6"/>
<rect x="1162.00" y="454.78" width="1" height="12.72" fill="#d6d6d6"/>
<rect x="1162.00" y="467.00" width="1" height="12.72" fill="#d6d6d6"/>
<rect x="1162.00" y="479.22" width="1" height="12.72" fill="#d6d6d6"/>
<rect x="1162.00" y="491.44" width="1" height="12.72" fill="#d6d6d6"/>
<rect x="1162.00" y="503.66" width="1" height="12.72" fill="#d6d6d6"/>
<rect x="1162.00" y="515.88" width="1" height="12.72" fill="#d6d6d6"/>
<rect x="1162.00" y="528.10" width="1" height="12.72" fill="#d6d6d6"/>
<rect x="1162.00" y="540.32" width="1" height="12.72" fill="#d6d6d6"/>
<rect x="1162.00" y="552.54" width="1" height="12.72" fill="#d6d6d6"/>
<rect x="1162.00" y="564.76" width="1" height="12.72" fill="#d6d6d6"/>
<rect x="1162.00" y="576.98" width="1" height="12.72" fill="#d6d6d6"/>
<rect x="1162.00" y="589.20" width="1" height="12.72" fill="#d6d6d6"/>
<rect x="1162.00" y="601.42" width="1" height="12.72" fill="#d6d6d6"/>
<rect x="1162.00" y="613.64" width="1" height="12.72" fill="#d6d6d6"/>
<rect x="1162.00" y="625.86" width="1" height="12.72" fill="#d6d6d6"/>
<rect x="1162.00" y="150" width="1" height="12" fill="#cdcdcd"/>
<rect x="1208.35" y="161.50" width="1" height="12.72" fill="#d6d6d6"/>
<rect x="1208.35" y="173.72" width="1" height="12.72" fill="#d6d6d6"/>
<rect x="1208.35" y="185.94" width="1" height="12.72" fill="#d6d6d6"/>
<rect x="1208.35" y="198.16" width="1" height="12.72" fill="#d6d6d6"/>
<rect x="1208.35" y="210.38" width="1" height="12.72" fill="#d6d6d6"/>
<rect x="1208.35" y="222.60" width="1" height="12.72" fill="#d6d6d6"/>
<rect x="1208.35" y="234.82" width="1" height="12.72" fill="#d6d6d6"/>
<rect x="1208.35" y="247.04" width="1" height="12.72" fill="#d6d6d6"/>
<rect x="1208.35" y="259.26" width="1" height="12.72" fill="#d6d6d6"/>
<rect x="1208.35" y="271.48" width="1" height="12.72" fill="#d6d6d6"/>
<rect x="1208.35" y="283.70" width="1" height="12.72" fill="#d6d6d6"/>
<rect x="1208.35" y="295.92" width="1" height="12.72" fill="#d6d6d6"/>
<rect x="1208.35" y="308.14" width="1" height="12.72" fill="#d6d6d6"/>
<rect x="1208.35" y="320.36" width="1" height="12.72" fill="#d6d6d6"/>
<rect x="1208.35" y="332.58" width="1" height="12.72" fill="#d6d6d6"/>
<rect x="1208.35" y="344.80" width="1" height="12.72" fill="#d6d6d6"/>
<rect x="1208.35" y="357.02" width="1" height="12.72" fill="#d6d6d6"/>
<rect x="1208.35" y="369.24" width="1" height="12.72" fill="#d6d6d6"/>
<rect x="1208.35" y="381.46" width="1" height="12.72" fill="#d6d6d6"/>
<rect x="1208.35" y="393.68" width="1" height="12.72" fill="#d6d6d6"/>
<rect x="1208.35" y="405.90" width="1" height="12.72" fill="#d6d6d6"/>
<rect x="1208.35" y="418.12" width="1" height="12.72" fill="#d6d6d6"/>
<rect x="1208.35" y="430.34" width="1" height="12.72" fill="#d6d6d6"/>
<rect x="1208.35" y="442.56" width="1" height="12.72" fill="#d6d6d6"/>
<rect x="1208.35" y="454.78" width="1" height="12.72" fill="#d6d6d6"/>
<rect x="1208.35" y="467.00" width="1" height="12.72" fill="#d6d6d6"/>
<rect x="1208.35" y="479.22" width="1" height="12.72" fill="#d6d6d6"/>
<rect x="1208.35" y="491.44" width="1" height="12.72" fill="#d6d6d6"/>
<rect x="1208.35" y="503.66" width="1" height="12.72" fill="#d6d6d6"/>
<rect x="1208.35" y="515.88" width="1" height="12.72" fill="#d6d6d6"/>
<rect x="1208.35" y="528.10" width="1" height="12.72" fill="#d6d6d6"/>
<rect x="1208.35" y="540.32" width="1" height="12.72" fill="#d6d6d6"/>
<rect x="1208.35" y="552.54" width="1" height="12.72" fill="#d6d6d6"/>
<rect x="1208.35" y="564.76" width="1" height="12.72" fill="#d6d6d6"/>
<rect x="1208.35" y="576.98" width="1" height="12.72" fill="#d6d6d6"/>
<rect x="1208.35" y="589.20" width="1" height="12.72" fill="#d6d6d6"/>
<rect x="1208.35" y="601.42" width="1" height="12.72" fill="#d6d6d6"/>
<rect x="1208.35" y="613.64" width="1" height="12.72" fill="#d6d6d6"/>
<rect x="1208.35" y="625.86" width="1" height="12.72" fill="#d6d6d6"/>
<rect x="1208.35" y="150" width="1" height="12" fill="#cdcdcd"/>
<rect x="16.9" y="150" width="1" height="489" fill="#c4c4c4"/>
<rect x="0" y="161.5" width="1215" height="0.8" fill="#c4c4c4"/>
<polygon points="14.4,152 14.4,160 6.4,160" fill="#bdbdbd"/>
</svg>
<div class="t" style="left:39.92px;top:153.00px;font-size:10.3px;color:#333;transform:scaleX(0.9100);transform-origin:0 0;">A</div>
<div class="t" style="left:88.52px;top:153.00px;font-size:10.3px;color:#333;transform:scaleX(0.9100);transform-origin:0 0;">B</div>
<div class="t" style="left:134.12px;top:153.00px;font-size:10.3px;color:#2a5a3a;transform:scaleX(0.9100);transform-origin:0 0;">C</div>
<div class="t" style="left:180.52px;top:153.00px;font-size:10.3px;color:#333;transform:scaleX(0.9100);transform-origin:0 0;">D</div>
<div class="t" style="left:257.72px;top:153.00px;font-size:10.3px;color:#333;transform:scaleX(0.9100);transform-origin:0 0;">E</div>
<div class="t" style="left:364.73px;top:153.00px;font-size:10.3px;color:#333;transform:scaleX(0.9100);transform-origin:0 0;">F</div>
<div class="t" style="left:440.43px;top:153.00px;font-size:10.3px;color:#333;transform:scaleX(0.9100);transform-origin:0 0;">G</div>
<div class="t" style="left:487.04px;top:153.00px;font-size:10.3px;color:#333;transform:scaleX(0.9100);transform-origin:0 0;">H</div>
<div class="t" style="left:535.47px;top:153.00px;font-size:10.3px;color:#333;transform:scaleX(0.9100);transform-origin:0 0;">I</div>
<div class="t" style="left:580.78px;top:153.00px;font-size:10.3px;color:#333;transform:scaleX(0.9100);transform-origin:0 0;">J</div>
<div class="t" style="left:626.35px;top:153.00px;font-size:10.3px;color:#333;transform:scaleX(0.9100);transform-origin:0 0;">K</div>
<div class="t" style="left:673.22px;top:153.00px;font-size:10.3px;color:#333;transform:scaleX(0.9100);transform-origin:0 0;">L</div>
<div class="t" style="left:718.27px;top:153.00px;font-size:10.3px;color:#333;transform:scaleX(0.9100);transform-origin:0 0;">M</div>
<div class="t" style="left:765.14px;top:153.00px;font-size:10.3px;color:#333;transform:scaleX(0.9100);transform-origin:0 0;">N</div>
<div class="t" style="left:811.23px;top:153.00px;font-size:10.3px;color:#333;transform:scaleX(0.9100);transform-origin:0 0;">O</div>
<div class="t" style="left:858.10px;top:153.00px;font-size:10.3px;color:#333;transform:scaleX(0.9100);transform-origin:0 0;">P</div>
<div class="t" style="left:903.93px;top:153.00px;font-size:10.3px;color:#333;transform:scaleX(0.9100);transform-origin:0 0;">Q</div>
<div class="t" style="left:950.54px;top:153.00px;font-size:10.3px;color:#333;transform:scaleX(0.9100);transform-origin:0 0;">R</div>
<div class="t" style="left:997.15px;top:153.00px;font-size:10.3px;color:#333;transform:scaleX(0.9100);transform-origin:0 0;">S</div>
<div class="t" style="left:1043.76px;top:153.00px;font-size:10.3px;color:#333;transform:scaleX(0.9100);transform-origin:0 0;">T</div>
<div class="t" style="left:1089.59px;top:153.00px;font-size:10.3px;color:#333;transform:scaleX(0.9100);transform-origin:0 0;">U</div>
<div class="t" style="left:1136.20px;top:153.00px;font-size:10.3px;color:#333;transform:scaleX(0.9100);transform-origin:0 0;">V</div>
<div class="t" style="left:1181.25px;top:153.00px;font-size:10.3px;color:#333;transform:scaleX(0.9100);transform-origin:0 0;">W</div>
<div class="t" style="left:6.13px;top:164.00px;font-size:10.6px;color:#333;transform:scaleX(0.8700);transform-origin:0 0;">1</div>
<div class="t" style="left:6.13px;top:176.00px;font-size:10.6px;color:#333;transform:scaleX(0.8700);transform-origin:0 0;">2</div>
<div class="t" style="left:6.13px;top:188.00px;font-size:10.6px;color:#333;transform:scaleX(0.8700);transform-origin:0 0;">3</div>
<div class="t" style="left:6.13px;top:200.00px;font-size:10.6px;color:#333;transform:scaleX(0.8700);transform-origin:0 0;">4</div>
<div class="t" style="left:6.13px;top:213.00px;font-size:10.6px;color:#333;transform:scaleX(0.8700);transform-origin:0 0;">5</div>
<div class="t" style="left:6.13px;top:225.00px;font-size:10.6px;color:#333;transform:scaleX(0.8700);transform-origin:0 0;">6</div>
<div class="t" style="left:6.13px;top:237.00px;font-size:10.6px;color:#333;transform:scaleX(0.8700);transform-origin:0 0;">7</div>
<div class="t" style="left:6.13px;top:249.00px;font-size:10.6px;color:#333;transform:scaleX(0.8700);transform-origin:0 0;">8</div>
<div class="t" style="left:6.13px;top:262.00px;font-size:10.6px;color:#333;transform:scaleX(0.8700);transform-origin:0 0;">9</div>
<div class="t" style="left:3.57px;top:274.00px;font-size:10.6px;color:#333;transform:scaleX(0.8700);transform-origin:0 0;">10</div>
<div class="t" style="left:3.91px;top:286.00px;font-size:10.6px;color:#333;transform:scaleX(0.8700);transform-origin:0 0;">11</div>
<div class="t" style="left:3.57px;top:298.00px;font-size:10.6px;color:#2a5a3a;transform:scaleX(0.8700);transform-origin:0 0;">12</div>
<div class="t" style="left:3.57px;top:310.00px;font-size:10.6px;color:#333;transform:scaleX(0.8700);transform-origin:0 0;">13</div>
<div class="t" style="left:3.57px;top:323.00px;font-size:10.6px;color:#333;transform:scaleX(0.8700);transform-origin:0 0;">14</div>
<div class="t" style="left:3.57px;top:335.00px;font-size:10.6px;color:#333;transform:scaleX(0.8700);transform-origin:0 0;">15</div>
<div class="t" style="left:3.57px;top:347.00px;font-size:10.6px;color:#333;transform:scaleX(0.8700);transform-origin:0 0;">16</div>
<div class="t" style="left:3.57px;top:359.00px;font-size:10.6px;color:#333;transform:scaleX(0.8700);transform-origin:0 0;">17</div>
<div class="t" style="left:3.57px;top:372.00px;font-size:10.6px;color:#333;transform:scaleX(0.8700);transform-origin:0 0;">18</div>
<div class="t" style="left:3.57px;top:384.00px;font-size:10.6px;color:#333;transform:scaleX(0.8700);transform-origin:0 0;">19</div>
<div class="t" style="left:3.57px;top:396.00px;font-size:10.6px;color:#333;transform:scaleX(0.8700);transform-origin:0 0;">20</div>
<div class="t" style="left:3.57px;top:408.00px;font-size:10.6px;color:#333;transform:scaleX(0.8700);transform-origin:0 0;">21</div>
<div class="t" style="left:3.57px;top:420.00px;font-size:10.6px;color:#333;transform:scaleX(0.8700);transform-origin:0 0;">22</div>
<div class="t" style="left:3.57px;top:433.00px;font-size:10.6px;color:#333;transform:scaleX(0.8700);transform-origin:0 0;">23</div>
<div class="t" style="left:3.57px;top:445.00px;font-size:10.6px;color:#333;transform:scaleX(0.8700);transform-origin:0 0;">24</div>
<div class="t" style="left:3.57px;top:457.00px;font-size:10.6px;color:#333;transform:scaleX(0.8700);transform-origin:0 0;">25</div>
<div class="t" style="left:3.57px;top:469.00px;font-size:10.6px;color:#333;transform:scaleX(0.8700);transform-origin:0 0;">26</div>
<div class="t" style="left:3.57px;top:482.00px;font-size:10.6px;color:#333;transform:scaleX(0.8700);transform-origin:0 0;">27</div>
<div class="t" style="left:3.57px;top:494.00px;font-size:10.6px;color:#333;transform:scaleX(0.8700);transform-origin:0 0;">28</div>
<div class="t" style="left:3.57px;top:506.00px;font-size:10.6px;color:#333;transform:scaleX(0.8700);transform-origin:0 0;">29</div>
<div class="t" style="left:3.57px;top:518.00px;font-size:10.6px;color:#333;transform:scaleX(0.8700);transform-origin:0 0;">30</div>
<div class="t" style="left:3.57px;top:530.00px;font-size:10.6px;color:#333;transform:scaleX(0.8700);transform-origin:0 0;">31</div>
<div class="t" style="left:3.57px;top:543.00px;font-size:10.6px;color:#333;transform:scaleX(0.8700);transform-origin:0 0;">32</div>
<div class="t" style="left:3.57px;top:555.00px;font-size:10.6px;color:#333;transform:scaleX(0.8700);transform-origin:0 0;">33</div>
<div class="t" style="left:3.57px;top:567.00px;font-size:10.6px;color:#333;transform:scaleX(0.8700);transform-origin:0 0;">34</div>
<div class="t" style="left:3.57px;top:579.00px;font-size:10.6px;color:#333;transform:scaleX(0.8700);transform-origin:0 0;">35</div>
<div class="t" style="left:3.57px;top:592.00px;font-size:10.6px;color:#333;transform:scaleX(0.8700);transform-origin:0 0;">36</div>
<div class="t" style="left:3.57px;top:604.00px;font-size:10.6px;color:#333;transform:scaleX(0.8700);transform-origin:0 0;">37</div>
<div class="t" style="left:3.57px;top:616.00px;font-size:10.6px;color:#333;transform:scaleX(0.8700);transform-origin:0 0;">38</div>
<div class="t" style="left:3.57px;top:628.00px;font-size:10.6px;color:#333;transform:scaleX(0.8700);transform-origin:0 0;">39</div>
<div class="t" style="left:19.60px;top:165.00px;font-size:10.3px;color:#000;transform:scaleX(0.9087);transform-origin:0 0;">Quy tắc</div>
<div class="t" style="left:19.60px;top:177.00px;font-size:10.3px;color:#000;transform:scaleX(0.9087);transform-origin:0 0;">Ít nhất phải có một họ và tên</div>
<div class="t" style="left:19.60px;top:189.00px;font-size:10.3px;color:#000;transform:scaleX(0.9087);transform-origin:0 0;">Sau khi được cấu hình, không thể chỉnh sửa ID. Xác nhận quy tắc ID trước khi đặt ID.</div>
<div class="t" style="left:19.60px;top:202.00px;font-size:10.3px;color:#000;transform:scaleX(0.9087);transform-origin:0 0;">KHÔNG thay đổi bố cục và tên đầu đề của cột trong tệp mẫu này. Việc nhập có thể bị lỗi nếu như thay đổi.</div>
<div class="t" style="left:19.60px;top:214.00px;font-size:10.3px;color:#000;transform:scaleX(0.9087);transform-origin:0 0;">Ban có thể thêm cá nhân vào một bộ phận hiện có. Tên bộ phận nên được phân tách bằng /. Ví dụ: nhập cá nhân vào Bộ phận A trong Tất cả các bộ phận. Đ.dạng: Tất cả các bộ phận/Bộ phận A.</div>
<div class="t" style="left:19.60px;top:226.00px;font-size:10.3px;color:#000;transform:scaleX(0.9087);transform-origin:0 0;">Thời gian bắt đầu của khoảng thời gian hiệu lực được sử dụng cho Mô-đun kiểm soát truy cập và Mô-đun thời gian và chấm công. Định dạng: yyyy/mm/dd hh: mm:ss.</div>
<div class="t" style="left:19.60px;top:238.00px;font-size:10.3px;color:#000;transform:scaleX(0.9087);transform-origin:0 0;">Thời gian kết thúc thời hạn hiệu lực được sử dụng cho Mô-đun kiểm soát truy cập và Mô-đun thời gian và chấm công. Định dạng: yyyy/mm/dd hh: mm:ss.</div>
<div class="t" style="left:19.60px;top:250.00px;font-size:10.3px;color:#000;transform:scaleX(0.9087);transform-origin:0 0;">ID</div>
<div class="t" style="left:70.50px;top:250.00px;font-size:10.3px;color:#000;transform:scaleX(0.9087);transform-origin:0 0;">Tên riêng</div>
<div class="t" style="left:116.40px;top:250.00px;font-size:10.3px;color:#000;transform:scaleX(0.9087);transform-origin:0 0;">Họ</div>
<div class="t" style="left:162.20px;top:250.00px;font-size:10.3px;color:#000;transform:scaleX(0.9087);transform-origin:0 0;">Bộ phận</div>
<div class="t" style="left:316.20px;top:250.00px;font-size:10.3px;color:#000;transform:scaleX(0.9087);transform-origin:0 0;">Thời Gian Kết Thúc của Khoảng Thời Gian Hiệu Lực</div>
<div class="t" style="left:70.50px;top:263.00px;font-size:10.3px;color:#000;transform:scaleX(0.9087);transform-origin:0 0;">A</div>
<div class="t" style="left:116.40px;top:263.00px;font-size:10.3px;color:#000;transform:scaleX(0.9087);transform-origin:0 0;">Nguyen</div>
<div class="t" style="left:70.50px;top:275.00px;font-size:10.3px;color:#000;transform:scaleX(0.9087);transform-origin:0 0;">B</div>
<div class="t" style="left:116.40px;top:275.00px;font-size:10.3px;color:#000;transform:scaleX(0.9087);transform-origin:0 0;">Pham</div>
<div class="a" style="left:207.4px;top:0;width:106.4px;height:639px;overflow:hidden"><div class="t" style="left:1.80px;top:250.00px;font-size:10.3px;color:#000;transform:scaleX(0.9087);transform-origin:0 0;">Thời Gian Bắt Đầu của Khoảng Thời Gian Hiệu Lực</div></div>
<div class="t" style="left:20.36px;top:263.00px;font-size:10.3px;color:#000;transform:scaleX(0.9087);transform-origin:0 0;">123123123</div>
<div class="t" style="left:25.55px;top:275.00px;font-size:10.3px;color:#000;transform:scaleX(0.9087);transform-origin:0 0;">34343434</div>
<div class="a" style="left:114.2px;top:295.82px;width:46.9px;height:13.42px;border:1.5px solid #3b7352"></div>
<div class="a" style="left:158.4px;top:307.04px;width:4px;height:4px;background:#3b7352;border:0.7px solid #fff"></div>
<svg class="a" style="left:234px;top:281px" width="14" height="14" viewBox="234 281 14 14">
<path d="M239.2 283.2h3.6v2.6h2.6v3.6h-2.6v2.6h-3.6v-2.6h-2.6v-3.6h2.6z" fill="#fff" stroke="#111" stroke-width="1.2" stroke-linejoin="round"/>
</svg>
<div class="a" style="left:0;top:427px;width:1215px;height:212px;background:linear-gradient(to bottom,rgba(0,0,0,0) 0%,rgba(0,0,0,0.02) 6%,rgba(0,0,0,0.07) 25%,rgba(0,0,0,0.13) 48.6%,rgba(0,0,0,0.185) 72.2%,rgba(0,0,0,0.235) 100%)"></div>
<div class="a" style="left:0;top:637px;width:64px;height:2px;background:#b8b8b8;border-top:0.9px solid #969696"></div>
<div class="a" style="left:162px;top:637px;width:1053px;height:2px;background:#b8b8b8;border-top:0.9px solid #969696"></div>
<svg class="a" style="left:0;top:0" width="1215" height="100" viewBox="0 0 1215 100">
<g transform="matrix(1,0,-0.34,1,23.7,0)">
<g fill="#df2020">
<path d="M929.6 37.6h9.9v12.6h11.6v-12.6h9.5v32.1h-9.5v-14.5h-11.6v14.5h-9.9z"/>
<path d="M967.6 37.6h9v32.1h-9z"/>
<path d="M984 37.6h9.5v11.6l7.3-11.6h10.3l-7.8 15.6 14.5 16.5h-10.7l-13.3-12.4v12.4h-9.5z"/>
</g>
<g fill="#6b6b6b">
<path d="M1017.3 37.6h8.7l13 24.4 2.6-24.4h6.2l-9 32.1h-8.9z"/>
<path d="M1051.7 37.6h8.6v32.1h-8.6z"/>
<path d="M1092 37.6V41.5H1079.5Q1077 41.5 1077.4 43.5L1078.2 47.5Q1078.6 49.5 1081 49.8L1087.5 50.8Q1091.8 51.5 1091.8 55.5V65Q1091.8 69.7 1087 69.7H1066.6V65.5H1082Q1083.6 65.5 1083.6 63.5V58Q1083.6 55.8 1081.5 55.5L1075 54.5Q1068.5 53.5 1068.2 49L1068 43Q1068 37.6 1073.5 37.6Z"/>
<path d="M1100 37.6h7.8v32.1h-7.8z"/>
<path fill-rule="evenodd" d="M1123 37.6h8c5 0 9 4 9 9v14.1c0 5-4 9-9 9h-8c-5 0-9-4-9-9v-14.1c0-5 4-9 9-9zM1124.5 41.9c-2.5 0-4.5 2-4.5 4.5v14.8c0 2.5 2 4.5 4.5 4.5h4.3c2.5 0 4.5-2 4.5-4.5v-14.8c0-2.5-2-4.5-4.5-4.5z"/>
<path d="M1147 37.6h8.2l13.2 18.6v-18.6h8.4v32.1h-8.2l-13.2-18.6v18.6h-8.4z"/>
</g>
</g>
<circle cx="1193" cy="42.1" r="2.9" fill="none" stroke="#9a9a9a" stroke-width="0.6"/>
<text x="1191.6" y="43.8" font-size="3.8" font-family="Liberation Sans" fill="#9a9a9a">R</text>
</svg>

<svg class="a" style="left:48px;top:58px" width="16" height="22" viewBox="48 58 16 22">
<path d="M50.2 59.6v14.6l3.4-3.2 2.4 5.4 2.4-1-2.3-5.3h4.8z" fill="#fff" stroke="#111" stroke-width="1.1" stroke-linejoin="round"/>
</svg>
</body></html>
